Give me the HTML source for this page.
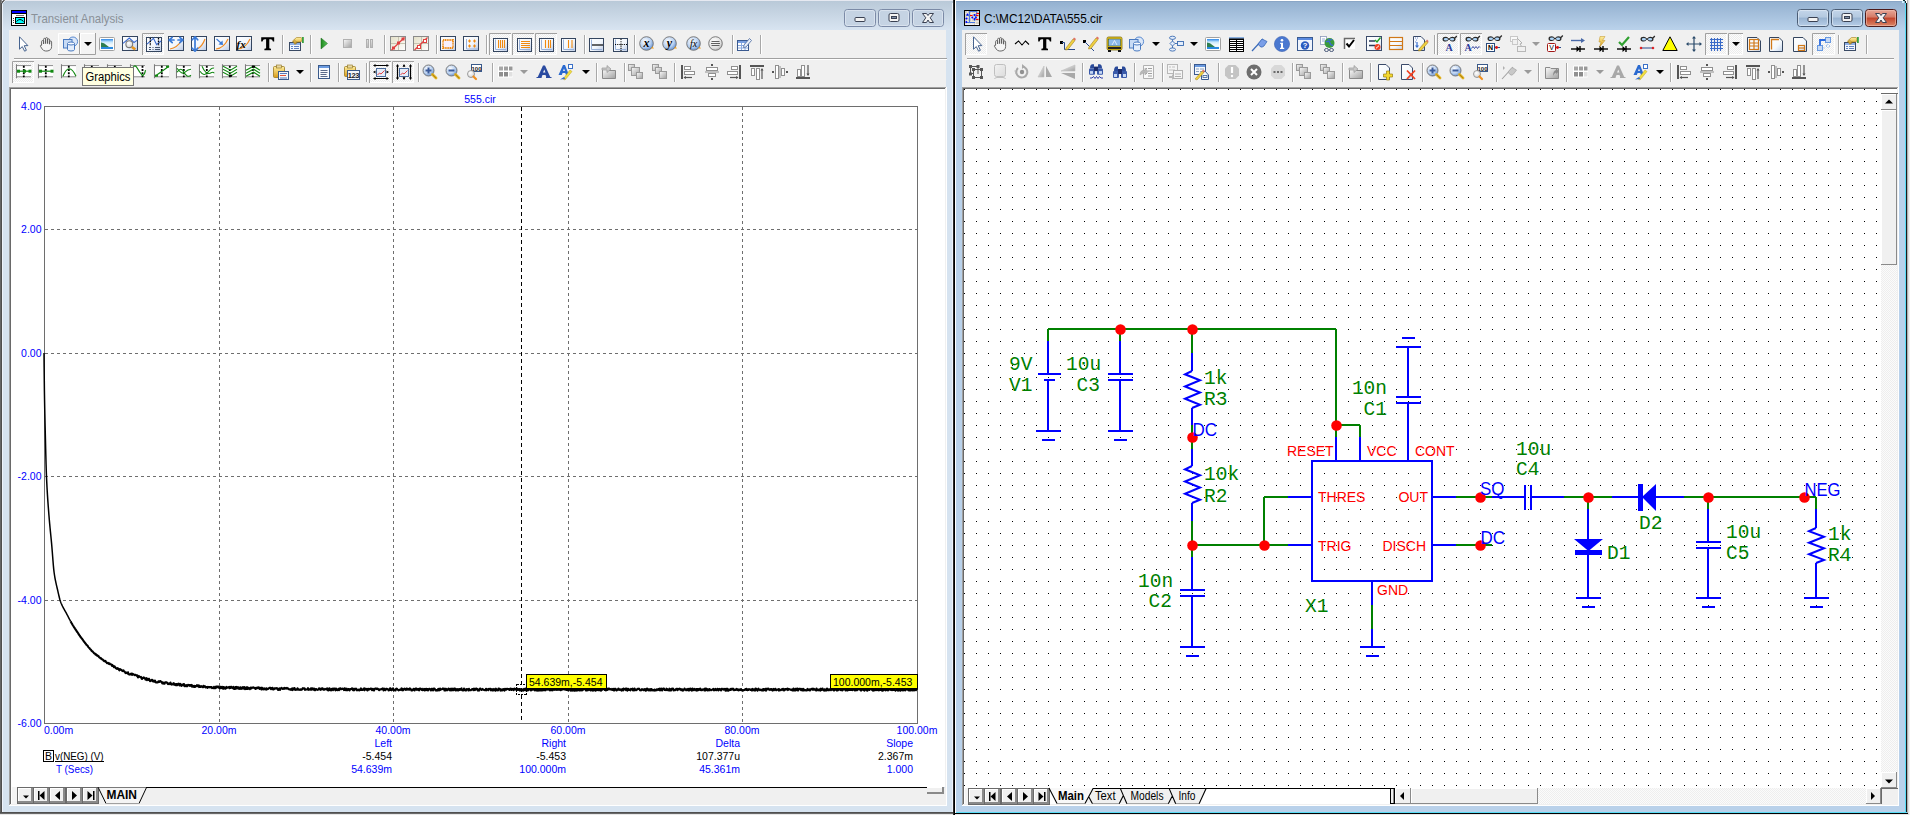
<!DOCTYPE html>
<html><head><meta charset="utf-8"><title>Micro-Cap</title>
<style>html,body{margin:0;padding:0;background:#fff;overflow:hidden;width:1910px;height:815px}svg{display:block;font-family:"Liberation Sans",sans-serif}</style>
</head><body><svg width="1910" height="815" viewBox="0 0 1910 815"><defs><linearGradient id="tgL" x1="0" y1="0" x2="0" y2="1"><stop offset="0" stop-color="#b9c9d8"/><stop offset="1" stop-color="#d8e4f1"/></linearGradient><linearGradient id="tgR" x1="0" y1="0" x2="0" y2="1"><stop offset="0" stop-color="#93b0cf"/><stop offset="1" stop-color="#bad2eb"/></linearGradient><pattern id="dots" x="964" y="89" width="12" height="12" patternUnits="userSpaceOnUse"><rect x="0" y="0" width="1" height="1" fill="#000"/></pattern><linearGradient id="cb1797" x1="0" y1="0" x2="0" y2="1"><stop offset="0" stop-color="#c4d6ea"/><stop offset="0.45" stop-color="#b4c9e0"/><stop offset="0.5" stop-color="#98b3d1"/><stop offset="1" stop-color="#b8cfe8"/></linearGradient><linearGradient id="cb1831" x1="0" y1="0" x2="0" y2="1"><stop offset="0" stop-color="#c4d6ea"/><stop offset="0.45" stop-color="#b4c9e0"/><stop offset="0.5" stop-color="#98b3d1"/><stop offset="1" stop-color="#b8cfe8"/></linearGradient><linearGradient id="cr1865" x1="0" y1="0" x2="0" y2="1"><stop offset="0" stop-color="#e9a99a"/><stop offset="0.45" stop-color="#d47a66"/><stop offset="0.5" stop-color="#c2442c"/><stop offset="1" stop-color="#dd8a6a"/></linearGradient><pattern id="chk" x="0" y="0" width="2" height="2" patternUnits="userSpaceOnUse"><rect width="2" height="2" fill="#fbfbfb"/><rect width="1" height="1" fill="#eeeeee"/><rect x="1" y="1" width="1" height="1" fill="#eeeeee"/></pattern><linearGradient id="gfr" x1="0" y1="0" x2="1" y2="1"><stop offset="0" stop-color="#ffffff"/><stop offset="0.55" stop-color="#f2f6fc"/><stop offset="1" stop-color="#b8c8e4"/></linearGradient>
<radialGradient id="gsph" cx="0.4" cy="0.35" r="0.7"><stop offset="0" stop-color="#ffffff"/><stop offset="0.6" stop-color="#b8d0f0"/><stop offset="1" stop-color="#5a88cc"/></radialGradient>
<radialGradient id="gsphg" cx="0.4" cy="0.35" r="0.7"><stop offset="0" stop-color="#ffffff"/><stop offset="0.7" stop-color="#e0e0e0"/><stop offset="1" stop-color="#a8a8a8"/></radialGradient>
<linearGradient id="ggray" x1="0" y1="0" x2="1" y2="1"><stop offset="0" stop-color="#fafafa"/><stop offset="1" stop-color="#a0a0a0"/></linearGradient>
<linearGradient id="gyel" x1="0" y1="0" x2="0" y2="1"><stop offset="0" stop-color="#fff0a0"/><stop offset="1" stop-color="#d89a18"/></linearGradient>
<linearGradient id="ggrn" x1="0" y1="0" x2="1" y2="0"><stop offset="0" stop-color="#1e8a1e"/><stop offset="1" stop-color="#5ac05a"/></linearGradient>
<linearGradient id="gsky" x1="0" y1="0" x2="0" y2="1"><stop offset="0" stop-color="#2a86e8"/><stop offset="0.3" stop-color="#c8e8fc"/><stop offset="0.6" stop-color="#f4fafc"/><stop offset="1" stop-color="#e0f0f8"/></linearGradient>
<linearGradient id="gbeige" x1="0" y1="0" x2="1" y2="1"><stop offset="0" stop-color="#e4e0c8"/><stop offset="1" stop-color="#ffffff"/></linearGradient>
<linearGradient id="gdoc" x1="0" y1="0" x2="1" y2="1"><stop offset="0" stop-color="#ffffff"/><stop offset="0.6" stop-color="#f4f8fc"/><stop offset="1" stop-color="#c4d4ec"/></linearGradient>
<pattern id="chk2" x="0" y="0" width="2" height="2" patternUnits="userSpaceOnUse"><rect width="2" height="2" fill="#fcfcfc"/><rect width="1" height="1" fill="#ececec"/><rect x="1" y="1" width="1" height="1" fill="#ececec"/></pattern></defs><rect x="0" y="0" width="1910" height="815" fill="#ffffff" /><rect x="0" y="0" width="953" height="1" fill="#e6e9f1" /><rect x="2" y="1" width="951" height="811" fill="#d6e3f0" /><rect x="2" y="1" width="951" height="29" fill="url(#tgL)" /><rect x="2" y="4" width="1" height="808" fill="#eef3fb" /><rect x="952" y="3" width="1" height="809" fill="#eef3fb" /><rect x="0" y="0" width="1" height="814" fill="#666666" /><rect x="1" y="0" width="1" height="3" fill="#8a8a8a" /><rect x="1" y="3" width="1" height="811" fill="#4f4f4f" /><rect x="2" y="1" width="1" height="2" fill="#5a5a5a" /><rect x="3" y="0" width="1" height="2" fill="#6a6a6a" /><rect x="4" y="0" width="1" height="1" fill="#8a8a8a" /><rect x="3" y="2" width="1" height="1" fill="#dfe8f2" /><rect x="4" y="1" width="1" height="1" fill="#dfe8f2" /><rect x="0" y="812" width="954" height="1" fill="#4f4f4f" /><rect x="0" y="813" width="954" height="1" fill="#6a6a6a" /><rect x="0" y="814" width="954" height="1" fill="#e8e8e8" /><rect x="953" y="0" width="1" height="815" fill="#2a2a2a" /><rect x="954" y="0" width="1" height="815" fill="#000000" /><rect x="9" y="30" width="937" height="57" fill="#f0f0f0" /><rect x="14" y="58" width="933" height="1" fill="#a0a0a0" /><rect x="14" y="59" width="933" height="1" fill="#ffffff" /><rect x="9" y="87" width="938" height="1" fill="#a0a0a0" /><rect x="9" y="87" width="1" height="719" fill="#a0a0a0" /><rect x="10" y="88" width="936" height="1" fill="#696969" /><rect x="10" y="88" width="1" height="717" fill="#696969" /><rect x="946" y="87" width="1" height="719" fill="#ffffff" /><rect x="9" y="805" width="938" height="1" fill="#ffffff" /><rect x="945" y="88" width="1" height="717" fill="#f0f0f0" /><rect x="10" y="804" width="936" height="1" fill="#f0f0f0" /><rect x="11" y="89" width="934" height="698" fill="#ffffff" /><rect x="11" y="788" width="934" height="16" fill="#f0f0f0" /><rect x="98" y="787" width="830" height="1" fill="#000000" /><rect x="955" y="0" width="1" height="815" fill="#ffffff" /><rect x="956" y="1" width="950" height="811" fill="#b9d1ea" /><rect x="956" y="1" width="950" height="29" fill="url(#tgR)" /><rect x="956" y="1" width="950" height="1" fill="#8aa6c6" /><rect x="1905" y="3" width="1" height="810" fill="#58dcf6" /><rect x="1906" y="3" width="1" height="812" fill="#1a1a1a" /><rect x="1907" y="0" width="1" height="815" fill="#b0b0b0" /><rect x="1903" y="0" width="2" height="1" fill="#103030" /><rect x="1905" y="1" width="1" height="2" fill="#103030" /><rect x="1902" y="1" width="2" height="2" fill="#c8f0fc" /><rect x="1908" y="0" width="1" height="815" fill="#dedede" /><rect x="1909" y="0" width="1" height="815" fill="#f2f2f2" /><rect x="956" y="812" width="951" height="1" fill="#58dcf6" /><rect x="955" y="813" width="953" height="1" fill="#000000" /><rect x="955" y="814" width="953" height="1" fill="#e8e8e8" /><rect x="962" y="30" width="937" height="57" fill="#f0f0f0" /><rect x="967" y="58" width="927" height="1" fill="#a0a0a0" /><rect x="967" y="59" width="927" height="1" fill="#ffffff" /><rect x="962" y="87" width="937" height="1" fill="#a0a0a0" /><rect x="962" y="87" width="1" height="719" fill="#a0a0a0" /><rect x="963" y="88" width="935" height="1" fill="#696969" /><rect x="963" y="88" width="1" height="717" fill="#696969" /><rect x="1898" y="87" width="1" height="719" fill="#ffffff" /><rect x="962" y="805" width="937" height="1" fill="#ffffff" /><rect x="1897" y="88" width="1" height="717" fill="#f0f0f0" /><rect x="963" y="804" width="935" height="1" fill="#f0f0f0" /><rect x="964" y="89" width="933" height="715" fill="#ffffff" /><line x1="219.5" y1="107" x2="219.5" y2="723" stroke="#6e6e6e" stroke-width="1" stroke-dasharray="3 3" shape-rendering="crispEdges"/><line x1="393.5" y1="107" x2="393.5" y2="723" stroke="#6e6e6e" stroke-width="1" stroke-dasharray="3 3" shape-rendering="crispEdges"/><line x1="568.5" y1="107" x2="568.5" y2="723" stroke="#6e6e6e" stroke-width="1" stroke-dasharray="3 3" shape-rendering="crispEdges"/><line x1="742.5" y1="107" x2="742.5" y2="723" stroke="#6e6e6e" stroke-width="1" stroke-dasharray="3 3" shape-rendering="crispEdges"/><line x1="45" y1="229.5" x2="917" y2="229.5" stroke="#6e6e6e" stroke-width="1" stroke-dasharray="3 3" shape-rendering="crispEdges"/><line x1="45" y1="353.5" x2="917" y2="353.5" stroke="#6e6e6e" stroke-width="1" stroke-dasharray="3 3" shape-rendering="crispEdges"/><line x1="45" y1="476.5" x2="917" y2="476.5" stroke="#6e6e6e" stroke-width="1" stroke-dasharray="3 3" shape-rendering="crispEdges"/><line x1="45" y1="600.5" x2="917" y2="600.5" stroke="#6e6e6e" stroke-width="1" stroke-dasharray="3 3" shape-rendering="crispEdges"/><rect x="44.5" y="106.5" width="873" height="617" fill="none" stroke="#6e6e6e" stroke-width="1" shape-rendering="crispEdges"/><line x1="521.5" y1="107" x2="521.5" y2="723" stroke="#000" stroke-width="1" stroke-dasharray="4 3" shape-rendering="crispEdges"/><text x="41.5" y="110" font-family="Liberation Sans" font-size="10.5" fill="#0000ff" text-anchor="end" font-weight="normal" >4.00</text><text x="41.5" y="233" font-family="Liberation Sans" font-size="10.5" fill="#0000ff" text-anchor="end" font-weight="normal" >2.00</text><text x="41.5" y="357" font-family="Liberation Sans" font-size="10.5" fill="#0000ff" text-anchor="end" font-weight="normal" >0.00</text><text x="41.5" y="480" font-family="Liberation Sans" font-size="10.5" fill="#0000ff" text-anchor="end" font-weight="normal" >-2.00</text><text x="41.5" y="604" font-family="Liberation Sans" font-size="10.5" fill="#0000ff" text-anchor="end" font-weight="normal" >-4.00</text><text x="41.5" y="727" font-family="Liberation Sans" font-size="10.5" fill="#0000ff" text-anchor="end" font-weight="normal" >-6.00</text><text x="219" y="734" font-family="Liberation Sans" font-size="10.5" fill="#0000ff" text-anchor="middle" font-weight="normal" >20.00m</text><text x="393" y="734" font-family="Liberation Sans" font-size="10.5" fill="#0000ff" text-anchor="middle" font-weight="normal" >40.00m</text><text x="568" y="734" font-family="Liberation Sans" font-size="10.5" fill="#0000ff" text-anchor="middle" font-weight="normal" >60.00m</text><text x="742" y="734" font-family="Liberation Sans" font-size="10.5" fill="#0000ff" text-anchor="middle" font-weight="normal" >80.00m</text><text x="917" y="734" font-family="Liberation Sans" font-size="10.5" fill="#0000ff" text-anchor="middle" font-weight="normal" >100.00m</text><text x="44" y="734" font-family="Liberation Sans" font-size="10.5" fill="#0000ff" text-anchor="start" font-weight="normal" >0.00m</text><text x="480" y="103" font-family="Liberation Sans" font-size="10.5" fill="#0000ff" text-anchor="middle" font-weight="normal" >555.cir</text><text x="392" y="747" font-family="Liberation Sans" font-size="10.5" fill="#0000ff" text-anchor="end" font-weight="normal" >Left</text><text x="566" y="747" font-family="Liberation Sans" font-size="10.5" fill="#0000ff" text-anchor="end" font-weight="normal" >Right</text><text x="740" y="747" font-family="Liberation Sans" font-size="10.5" fill="#0000ff" text-anchor="end" font-weight="normal" >Delta</text><text x="913" y="747" font-family="Liberation Sans" font-size="10.5" fill="#0000ff" text-anchor="end" font-weight="normal" >Slope</text><text x="392" y="760" font-family="Liberation Sans" font-size="10.5" fill="#000000" text-anchor="end" font-weight="normal" >-5.454</text><text x="566" y="760" font-family="Liberation Sans" font-size="10.5" fill="#000000" text-anchor="end" font-weight="normal" >-5.453</text><text x="740" y="760" font-family="Liberation Sans" font-size="10.5" fill="#000000" text-anchor="end" font-weight="normal" >107.377u</text><text x="913" y="760" font-family="Liberation Sans" font-size="10.5" fill="#000000" text-anchor="end" font-weight="normal" >2.367m</text><text x="392" y="773" font-family="Liberation Sans" font-size="10.5" fill="#0000ff" text-anchor="end" font-weight="normal" >54.639m</text><text x="566" y="773" font-family="Liberation Sans" font-size="10.5" fill="#0000ff" text-anchor="end" font-weight="normal" >100.000m</text><text x="740" y="773" font-family="Liberation Sans" font-size="10.5" fill="#0000ff" text-anchor="end" font-weight="normal" >45.361m</text><text x="913" y="773" font-family="Liberation Sans" font-size="10.5" fill="#0000ff" text-anchor="end" font-weight="normal" >1.000</text><rect x="43.5" y="750.5" width="10" height="11" fill="none" stroke="#000" stroke-width="1" shape-rendering="crispEdges"/><text x="45" y="760" font-family="Liberation Sans" font-size="10.5" fill="#000" text-anchor="start" font-weight="normal" >B</text><text x="55" y="760" font-family="Liberation Sans" font-size="10.5" fill="#000" text-anchor="start" font-weight="normal" textLength="48.5" lengthAdjust="spacingAndGlyphs">v(NEG) (V)</text><rect x="55" y="761" width="49" height="1" fill="#000" /><text x="56" y="773" font-family="Liberation Sans" font-size="10.5" fill="#0000ff" text-anchor="start" font-weight="normal" textLength="37" lengthAdjust="spacingAndGlyphs">T (Secs)</text><polyline points="44.00,353.00 44.14,367.36 44.28,380.40 44.41,390.91 44.55,399.43 44.69,406.98 44.83,413.77 44.97,420.00 45.10,425.87 45.24,431.57 45.38,437.30 45.52,443.02 45.66,448.64 45.79,454.11 45.93,459.34 46.07,464.26 46.21,468.79 46.34,472.86 46.48,476.40 46.62,479.50 46.76,482.43 46.90,485.20 47.03,487.82 47.17,490.30 47.31,492.66 47.45,494.91 47.59,497.06 47.72,499.11 47.86,501.10 48.00,503.02 48.20,505.71 48.57,510.52 48.94,515.28 49.31,519.73 49.68,523.88 50.05,527.79 50.42,531.57 50.79,535.29 51.16,539.04 51.53,542.90 51.89,546.98 52.26,551.47 52.63,556.22 53.00,560.97 53.37,565.44 53.74,569.37 54.11,572.49 54.48,575.00 54.85,577.26 55.22,579.31 55.59,581.19 55.96,582.93 56.33,584.57 56.70,586.15 57.07,587.71 57.44,589.29 57.81,590.91 58.18,592.55 58.55,594.17 58.92,595.76 59.28,597.28 59.65,598.71 60.02,600.03 60.39,601.21 60.76,602.24 61.13,603.19 61.50,604.08 61.87,604.93 62.24,605.72 62.61,606.48 62.98,607.20 63.35,607.90 63.72,608.57 64.09,609.22 64.46,609.87 64.83,610.51 65.20,611.15 65.57,611.80 65.94,612.45 66.31,613.13 66.67,613.83 67.04,614.54 67.41,615.25 67.78,615.96 68.15,616.67 68.52,617.39 68.89,618.10 69.26,618.80 69.63,619.51 70.00,620.21 70.50,621.14" fill="none" stroke="#000" stroke-width="1.5" stroke-linejoin="round"/><polyline points="70.50,621.14 71.00,622.05 71.50,622.97 72.00,623.81 72.50,624.70 73.00,625.52 73.50,626.28 74.00,627.11 74.50,627.79 75.00,628.62 75.50,629.30 76.00,630.05 76.50,630.88 77.00,631.73 77.50,632.28 78.00,633.04 78.50,633.90 79.00,634.74 79.50,635.34 80.00,636.00 80.50,636.93 81.00,637.27 81.50,638.31 82.00,638.76 82.50,639.38 83.00,640.04 83.50,640.80 84.00,641.72 84.50,642.05 85.00,642.92 85.50,643.59 86.00,644.07 86.50,644.80 87.00,645.11 87.50,645.71 88.00,646.40 88.50,647.30 89.00,647.70 89.50,648.19 90.00,648.94 90.50,649.38 91.00,649.80 91.50,650.70 92.00,651.14 92.50,651.27 93.00,652.03 93.50,652.46 94.00,653.23 94.50,653.55 95.00,653.58 95.50,654.64 96.00,654.24 96.50,654.92 97.00,655.64 97.50,655.43 98.00,656.15 98.50,656.06 99.00,657.10 99.50,657.58 100.00,657.75 100.50,658.45 101.00,658.19 101.50,658.98 102.00,659.23 102.50,659.56 103.00,659.76 103.50,660.58 104.00,661.06 104.50,660.81 105.00,661.39 105.50,660.94 106.00,662.11 106.50,662.36 107.00,663.16 107.50,663.25 108.00,662.82 108.50,663.27 109.00,663.98 109.50,663.35 110.00,664.29 110.50,664.15 111.00,664.37 111.50,664.56 112.00,665.94 112.50,665.23 113.00,665.69 113.50,666.20 114.00,667.25 114.50,666.24 115.00,667.11 115.50,667.54 116.00,668.37 116.50,668.53 117.00,668.87 117.50,668.11 118.00,668.60 118.50,668.74 119.00,669.93 119.50,670.31 120.00,669.08 120.50,669.36 121.00,669.69 121.50,669.92 122.00,670.62 122.50,671.05 123.00,670.64 123.50,670.35 124.00,671.38 124.50,671.49 125.00,672.10 125.50,673.09 126.00,672.77 126.50,672.61 127.00,673.03 127.50,673.35 128.00,672.22 128.50,674.22 129.00,674.16 129.50,674.56 130.00,674.58 130.50,673.87 131.00,674.07 131.50,673.59 132.00,674.94 132.50,673.85 133.00,674.03 133.50,674.52 134.00,674.59 134.50,675.15 135.00,674.68 135.50,674.73 136.00,675.23 136.50,675.29 137.00,676.03 137.50,675.44 138.00,677.47 138.50,677.06 139.00,676.19 139.50,676.58 140.00,676.94 140.50,677.13 141.00,676.76 141.50,678.51 142.00,678.97 142.50,677.96 143.00,678.15 143.50,677.42 144.00,677.60 144.50,678.27 145.00,678.24 145.50,679.62 146.00,678.29 146.50,678.12 147.00,680.29 147.50,679.49 148.00,678.78 148.50,679.79 149.00,678.78 149.50,680.00 150.00,681.12 150.50,680.99 151.00,680.74 151.50,679.90 152.00,680.25 152.50,679.92 153.00,681.36 153.50,680.95 154.00,681.60 154.50,680.71 155.00,680.58 155.50,681.98 156.00,682.46 156.50,682.27 157.00,682.26 157.50,682.38 158.00,682.30 158.50,681.26 159.00,681.98 159.50,681.71 160.00,681.08 160.50,681.15 161.00,681.78 161.50,681.81 162.00,682.84 162.50,683.49 163.00,682.44 163.50,683.58 164.00,683.76 164.50,683.76 165.00,682.53 165.50,682.28 166.00,682.36 166.50,682.36 167.00,682.44 167.50,683.43 168.00,684.10 168.50,684.03 169.00,683.30 169.50,683.75 170.00,684.13 170.50,682.62 171.00,683.95 171.50,684.56 172.00,684.34 172.50,684.33 173.00,683.79 173.50,683.20 174.00,684.60 174.50,683.65 175.00,684.74 175.50,685.18 176.00,683.97 176.50,684.04 177.00,685.30 177.50,684.86 178.00,683.70 178.50,683.66 179.00,683.77 179.50,685.48 180.00,685.32 180.50,683.92 181.00,685.48 181.50,685.87 182.00,685.21 182.50,684.59 183.00,685.08 183.50,684.21 184.00,684.00 184.50,686.16 185.00,685.50 185.50,685.28 186.00,686.23 186.50,685.18 187.00,686.19 187.50,686.14 188.00,684.83 188.50,684.97 189.00,685.11 189.50,685.04 190.00,685.84 190.50,685.17 191.00,685.57 191.50,684.98 192.00,686.73 192.50,685.55 193.00,685.83 193.50,686.14 194.00,686.89 194.50,685.87 195.00,687.01 195.50,686.13 196.00,686.24 196.50,686.26 197.00,685.19 197.50,686.15 198.00,685.63 198.50,685.27 199.00,687.06 199.50,685.71 200.00,686.41 200.50,687.00 201.00,686.67 201.50,686.20 202.00,686.65 202.50,686.77 203.00,687.31 203.50,685.85 204.00,686.88 204.50,686.22 205.00,686.32 205.50,687.44 206.00,686.89 206.50,687.03 207.00,687.50 207.50,687.86 208.00,686.86 208.50,687.26 209.00,687.05 209.50,687.09 210.00,687.52 210.50,687.01 211.00,687.22 211.50,687.12 212.00,688.16 212.50,687.65 213.00,688.07 213.50,688.23 214.00,686.75 214.50,687.43 215.00,688.30 215.50,688.09 216.00,686.57 216.50,686.55 217.00,687.27 217.50,686.48 218.00,686.87 218.50,686.51 219.00,687.84 219.50,688.11 220.00,688.37 220.50,686.75 221.00,688.01 221.50,687.90 222.00,686.77 222.50,688.42 223.00,688.62 223.50,686.99 224.00,688.61 224.50,687.41 225.00,687.62 225.50,688.74 226.00,688.41 226.50,686.94 227.00,687.55 227.50,687.75 228.00,687.38 228.50,687.07 229.00,687.36 229.50,688.26 230.00,686.73 230.50,687.92 231.00,687.68 231.50,686.77 232.00,687.47 232.50,688.13 233.00,687.89 233.50,686.92 234.00,688.96 234.50,688.54 235.00,688.96 235.50,687.06 236.00,687.43 236.50,686.95 237.00,688.58 237.50,687.48 238.00,687.18 238.50,687.84 239.00,688.93 239.50,688.74 240.00,687.52 240.50,687.29 241.00,688.99 241.50,688.24 242.00,688.54 242.50,687.21 243.00,687.15 243.50,688.55 244.00,687.98 244.50,687.22 245.00,689.13 245.50,688.48 246.00,688.86 246.50,687.29 247.00,689.00 247.50,687.27 248.00,689.04 248.50,688.15 249.00,687.91 249.50,688.39 250.00,689.22 250.50,687.79 251.00,687.49 251.50,688.38 252.00,687.75 252.50,687.48 253.00,687.61 253.50,687.37 254.00,687.72 254.50,687.97 255.00,687.97 255.50,688.98 256.00,687.95 256.50,688.43 257.00,687.73 257.50,688.11 258.00,687.40 258.50,687.92 259.00,687.41 259.50,689.00 260.00,688.61 260.50,687.83 261.00,688.46 261.50,689.49 262.00,687.67 262.50,689.25 263.00,688.41 263.50,688.56 264.00,689.31 264.50,688.35 265.00,688.61 265.50,689.02 266.00,689.68 266.50,688.28 267.00,689.37 267.50,689.10 268.00,688.95 268.50,688.45 269.00,688.34 269.50,687.70 270.00,687.88 270.50,687.75 271.00,689.24 271.50,688.18 272.00,687.98 272.50,687.82 273.00,689.49 273.50,689.57 274.00,689.13 274.50,688.29 275.00,688.21 275.50,688.33 276.00,688.70 276.50,688.05 277.00,688.69 277.50,688.30 278.00,689.84 278.50,689.87 279.00,688.94 279.50,688.29 280.00,689.88 280.50,688.44 281.00,688.55 281.50,687.78 282.00,688.62 282.50,688.84 283.00,688.91 283.50,688.25 284.00,688.92 284.50,687.83 285.00,688.41 285.50,688.03 286.00,688.72 286.50,687.94 287.00,687.91 287.50,688.53 288.00,688.38 288.50,689.16 289.00,689.05 289.50,689.54 290.00,689.34 290.50,689.48 291.00,689.84 291.50,688.77 292.00,688.64 292.50,690.09 293.00,688.26 293.50,689.53 294.00,689.36 294.50,688.05 295.00,689.79 295.50,689.92 296.00,689.35 296.50,689.59 297.00,689.77 297.50,688.29 298.00,689.14 298.50,689.10 299.00,689.84 299.50,689.78 300.00,689.83 300.50,689.30 301.00,689.98 301.50,689.53 302.00,689.56 302.50,688.54 303.00,688.11 303.50,688.34 304.00,688.84 304.50,688.28 305.00,689.90 305.50,689.29 306.00,689.45 306.50,689.45 307.00,689.57 307.50,689.16 308.00,688.09 308.50,689.84 309.00,689.74 309.50,689.20 310.00,689.28 310.50,689.55 311.00,688.25 311.50,689.73 312.00,688.67 312.50,688.28 313.00,688.71 313.50,689.73 314.00,688.58 314.50,689.76 315.00,690.28 315.50,689.22 316.00,688.98 316.50,689.20 317.00,689.65 317.50,689.84 318.00,689.51 318.50,689.57 319.00,688.33 319.50,688.48 320.00,688.72 320.50,689.80 321.00,688.84 321.50,689.42 322.00,688.20 322.50,688.31 323.00,688.77 323.50,689.66 324.00,689.70 324.50,689.67 325.00,688.82 325.50,689.32 326.00,689.21 326.50,689.22 327.00,688.45 327.50,690.16 328.00,688.63 328.50,690.35 329.00,690.26 329.50,688.24 330.00,689.21 330.50,690.00 331.00,690.33 331.50,689.19 332.00,688.80 332.50,688.67 333.00,690.29 333.50,688.67 334.00,689.49 334.50,688.52 335.00,689.36 335.50,690.31 336.00,688.51 336.50,690.02 337.00,689.34 337.50,690.17 338.00,689.77 338.50,688.73 339.00,690.20 339.50,689.29 340.00,688.28 340.50,688.23 341.00,689.31 341.50,689.22 342.00,688.89 342.50,688.54 343.00,688.99 343.50,688.93 344.00,690.08 344.50,688.24 345.00,689.89 345.50,690.08 346.00,688.50 346.50,690.28 347.00,689.81 347.50,690.22 348.00,688.88 348.50,689.06 349.00,689.11 349.50,690.44 350.00,689.54 350.50,689.04 351.00,689.19 351.50,688.85 352.00,688.36 352.50,688.47 353.00,690.09 353.50,688.88 354.00,690.31 354.50,688.80 355.00,688.84 355.50,689.38 356.00,688.68 356.50,689.08 357.00,690.36 357.50,690.21 358.00,690.05 358.50,689.65 359.00,690.27 359.50,690.34 360.00,689.47 360.50,689.85 361.00,688.38 361.50,689.88 362.00,689.26 362.50,689.93 363.00,689.69 363.50,688.90 364.00,688.38 364.50,690.31 365.00,688.56 365.50,689.32 366.00,689.03 366.50,688.93 367.00,689.91 367.50,690.43 368.00,688.86 368.50,689.73 369.00,688.95 369.50,689.51 370.00,689.15 370.50,688.66 371.00,688.64 371.50,688.75 372.00,690.28 372.50,689.39 373.00,688.78 373.50,690.29 374.00,690.49 374.50,689.29 375.00,688.60 375.50,688.72 376.00,688.50 376.50,689.05 377.00,688.50 377.50,688.83 378.00,688.87 378.50,689.56 379.00,690.26 379.50,689.95 380.00,689.21 380.50,689.22 381.00,689.46 381.50,689.14 382.00,689.05 382.50,688.45 383.00,688.92 383.50,690.44 384.00,688.59 384.50,689.42 385.00,689.70 385.50,690.21 386.00,688.79 386.50,688.91 387.00,688.87 387.50,689.20 388.00,689.30 388.50,690.42 389.00,690.19 389.50,690.24 390.00,688.37 390.50,688.40 391.00,689.89 391.50,690.30 392.00,689.37 392.50,689.62 393.00,688.33 393.50,689.19 394.00,690.37 394.50,690.15 395.00,690.21 395.50,690.47 396.00,688.88 396.50,688.58 397.00,688.68 397.50,689.49 398.00,689.84 398.50,690.41 399.00,689.93 399.50,689.76 400.00,690.02 400.50,689.35 401.00,689.56 401.50,688.43 402.00,690.07 402.50,688.86 403.00,690.37 403.50,689.77 404.00,689.02 404.50,688.63 405.00,688.90 405.50,689.75 406.00,689.89 406.50,688.60 407.00,688.51 407.50,689.51 408.00,689.64 408.50,689.21 409.00,688.85 409.50,689.68 410.00,688.38 410.50,689.02 411.00,689.37 411.50,690.47 412.00,689.78 412.50,690.31 413.00,689.41 413.50,688.88 414.00,688.91 414.50,690.48 415.00,689.92 415.50,689.04 416.00,688.41 416.50,689.46 417.00,689.85 417.50,689.29 418.00,688.94 418.50,689.84 419.00,690.41 419.50,688.87 420.00,688.45 420.50,689.12 421.00,689.30 421.50,689.88 422.00,688.81 422.50,690.13 423.00,690.00 423.50,689.49 424.00,688.83 424.50,690.51 425.00,689.07 425.50,690.18 426.00,688.89 426.50,688.87 427.00,690.06 427.50,689.03 428.00,690.48 428.50,689.48 429.00,688.80 429.50,688.88 430.00,689.30 430.50,689.85 431.00,690.48 431.50,688.71 432.00,689.26 432.50,688.86 433.00,690.53 433.50,688.70 434.00,688.51 434.50,688.53 435.00,689.26 435.50,690.37 436.00,690.34 436.50,690.01 437.00,690.59 437.50,690.45 438.00,689.12 438.50,688.81 439.00,690.46 439.50,690.04 440.00,688.47 440.50,689.86 441.00,689.23 441.50,689.22 442.00,689.13 442.50,688.78 443.00,688.41 443.50,689.02 444.00,689.18 444.50,690.51 445.00,688.68 445.50,690.53 446.00,688.86 446.50,689.19 447.00,690.22 447.50,690.22 448.00,689.36 448.50,688.52 449.00,689.45 449.50,689.23 450.00,690.44 450.50,688.84 451.00,689.22 451.50,690.39 452.00,688.48 452.50,689.32 453.00,690.20 453.50,690.10 454.00,688.51 454.50,688.49 455.00,688.56 455.50,690.44 456.00,688.99 456.50,690.06 457.00,690.40 457.50,689.17 458.00,689.02 458.50,690.53 459.00,689.78 459.50,689.00 460.00,690.00 460.50,689.12 461.00,689.03 461.50,688.43 462.00,690.09 462.50,690.44 463.00,689.82 463.50,690.50 464.00,688.48 464.50,688.94 465.00,689.48 465.50,690.54 466.00,690.53 466.50,689.28 467.00,688.98 467.50,689.38 468.00,689.52 468.50,690.48 469.00,688.84 469.50,690.20 470.00,690.06 470.50,690.25 471.00,690.14 471.50,689.77 472.00,689.16 472.50,689.14 473.00,689.23 473.50,690.16 474.00,688.61 474.50,688.87 475.00,690.10 475.50,688.98 476.00,688.58 476.50,688.52 477.00,689.66 477.50,689.16 478.00,690.60 478.50,690.39 479.00,690.62 479.50,689.03 480.00,688.63 480.50,688.66 481.00,689.54 481.50,690.01 482.00,689.43 482.50,688.96 483.00,689.37 483.50,689.81 484.00,689.93 484.50,690.09 485.00,690.31 485.50,689.91 486.00,688.72 486.50,690.30 487.00,689.10 487.50,689.70 488.00,689.27 488.50,690.08 489.00,688.89 489.50,689.00 490.00,688.99 490.50,688.79 491.00,690.40 491.50,689.73 492.00,689.17 492.50,689.33 493.00,690.64 493.50,689.57 494.00,688.97 494.50,690.24 495.00,689.90 495.50,690.64 496.00,688.68 496.50,689.50 497.00,690.26 497.50,690.31 498.00,690.47 498.50,688.55 499.00,689.11 499.50,688.72 500.00,688.88 500.50,690.60 501.00,689.75 501.50,690.51 502.00,689.28 502.50,690.37 503.00,689.45 503.50,689.04 504.00,690.18 504.50,690.55 505.00,688.70 505.50,689.78 506.00,689.83 506.50,688.95 507.00,689.28 507.50,688.78 508.00,688.92 508.50,689.03 509.00,689.79 509.50,689.90 510.00,688.92 510.50,688.50 511.00,689.19 511.50,689.96 512.00,688.88 512.50,689.16 513.00,688.92 513.50,690.22 514.00,689.68 514.50,688.61 515.00,688.70 515.50,689.34 516.00,689.68 516.50,689.88 517.00,688.67 517.50,688.83 518.00,690.00 518.50,689.38 519.00,689.10 519.50,689.15 520.00,690.57 520.50,689.16 521.00,689.72 521.50,689.26 522.00,689.39 522.50,690.38 523.00,690.67 523.50,689.28 524.00,688.91 524.50,690.08 525.00,688.93 525.50,688.49 526.00,690.46 526.50,689.41 527.00,690.29 527.50,689.37 528.00,690.42 528.50,689.50 529.00,688.84 529.50,688.51 530.00,689.70 530.50,689.89 531.00,690.48 531.50,688.68 532.00,689.85 532.50,689.30 533.00,689.59 533.50,688.80 534.00,689.11 534.50,689.63 535.00,690.52 535.50,688.72 536.00,689.56 536.50,690.26 537.00,690.61 537.50,688.92 538.00,688.76 538.50,690.56 539.00,690.63 539.50,689.55 540.00,688.60 540.50,690.52 541.00,689.34 541.50,690.48 542.00,689.85 542.50,690.30 543.00,688.84 543.50,690.22 544.00,688.98 544.50,689.38 545.00,690.35 545.50,690.31 546.00,688.89 546.50,688.97 547.00,689.37 547.50,689.63 548.00,689.33 548.50,688.76 549.00,689.03 549.50,690.09 550.00,690.46 550.50,688.58 551.00,689.73 551.50,690.16 552.00,688.58 552.50,690.34 553.00,688.75 553.50,689.81 554.00,689.70 554.50,689.87 555.00,689.17 555.50,689.42 556.00,689.77 556.50,689.43 557.00,689.94 557.50,689.48 558.00,689.46 558.50,688.55 559.00,689.86 559.50,689.57 560.00,689.01 560.50,690.17 561.00,690.21 561.50,689.50 562.00,688.89 562.50,689.54 563.00,688.73 563.50,688.78 564.00,689.44 564.50,688.70 565.00,689.47 565.50,689.62 566.00,688.59 566.50,689.90 567.00,688.68 567.50,690.11 568.00,690.21 568.50,689.62 569.00,688.62 569.50,689.61 570.00,689.33 570.50,690.59 571.00,688.80 571.50,690.38 572.00,690.69 572.50,690.11 573.00,690.29 573.50,688.92 574.00,690.66 574.50,689.58 575.00,690.60 575.50,690.51 576.00,688.86 576.50,690.23 577.00,690.55 577.50,688.64 578.00,689.27 578.50,690.16 579.00,688.85 579.50,690.47 580.00,689.10 580.50,690.29 581.00,688.81 581.50,689.60 582.00,690.52 582.50,688.96 583.00,689.08 583.50,689.61 584.00,689.20 584.50,688.58 585.00,688.90 585.50,688.85 586.00,690.56 586.50,689.99 587.00,690.47 587.50,688.87 588.00,690.23 588.50,688.75 589.00,689.67 589.50,689.90 590.00,689.29 590.50,690.42 591.00,689.72 591.50,689.78 592.00,690.44 592.50,688.73 593.00,690.68 593.50,689.89 594.00,689.37 594.50,690.25 595.00,689.08 595.50,690.68 596.00,689.77 596.50,689.29 597.00,690.18 597.50,689.47 598.00,688.89 598.50,690.14 599.00,688.61 599.50,690.30 600.00,689.06 600.50,689.91 601.00,690.66 601.50,689.79 602.00,689.96 602.50,689.19 603.00,688.50 603.50,688.57 604.00,688.83 604.50,689.86 605.00,689.45 605.50,689.63 606.00,690.47 606.50,688.79 607.00,689.00 607.50,689.94 608.00,688.55 608.50,688.51 609.00,689.28 609.50,688.73 610.00,689.29 610.50,688.99 611.00,689.78 611.50,689.80 612.00,688.95 612.50,689.87 613.00,689.54 613.50,688.80 614.00,690.56 614.50,689.04 615.00,688.83 615.50,688.71 616.00,689.90 616.50,690.42 617.00,690.22 617.50,689.38 618.00,689.08 618.50,688.53 619.00,689.92 619.50,689.74 620.00,689.27 620.50,689.92 621.00,689.48 621.50,690.56 622.00,690.11 622.50,689.05 623.00,690.49 623.50,688.60 624.00,689.67 624.50,689.39 625.00,689.02 625.50,688.63 626.00,690.21 626.50,688.53 627.00,689.71 627.50,690.57 628.00,688.81 628.50,688.94 629.00,689.84 629.50,689.62 630.00,689.91 630.50,690.29 631.00,688.88 631.50,689.18 632.00,689.16 632.50,688.61 633.00,690.46 633.50,690.22 634.00,690.07 634.50,688.51 635.00,690.36 635.50,690.14 636.00,689.52 636.50,690.13 637.00,689.50 637.50,689.00 638.00,688.73 638.50,689.01 639.00,688.59 639.50,689.24 640.00,690.15 640.50,690.03 641.00,690.36 641.50,690.07 642.00,689.09 642.50,689.72 643.00,689.46 643.50,690.23 644.00,689.65 644.50,689.08 645.00,689.91 645.50,690.62 646.00,688.98 646.50,690.44 647.00,688.53 647.50,689.07 648.00,689.02 648.50,690.14 649.00,690.58 649.50,690.14 650.00,689.22 650.50,690.44 651.00,689.22 651.50,689.03 652.00,690.50 652.50,689.89 653.00,690.02 653.50,689.96 654.00,690.65 654.50,689.53 655.00,690.35 655.50,690.03 656.00,690.39 656.50,689.46 657.00,690.09 657.50,689.75 658.00,689.18 658.50,688.97 659.00,689.87 659.50,688.67 660.00,690.50 660.50,688.82 661.00,688.56 661.50,688.73 662.00,690.54 662.50,689.26 663.00,688.81 663.50,688.56 664.00,688.59 664.50,690.02 665.00,689.89 665.50,690.03 666.00,690.12 666.50,688.64 667.00,689.80 667.50,689.30 668.00,690.30 668.50,690.30 669.00,690.46 669.50,688.65 670.00,690.41 670.50,690.51 671.00,690.58 671.50,688.74 672.00,688.95 672.50,688.75 673.00,688.58 673.50,690.36 674.00,690.29 674.50,689.90 675.00,690.32 675.50,689.89 676.00,689.13 676.50,688.72 677.00,688.72 677.50,690.17 678.00,688.95 678.50,689.20 679.00,689.43 679.50,688.55 680.00,689.06 680.50,689.12 681.00,690.07 681.50,689.31 682.00,689.21 682.50,690.62 683.00,689.61 683.50,690.37 684.00,689.86 684.50,688.57 685.00,689.41 685.50,689.46 686.00,690.20 686.50,689.26 687.00,690.05 687.50,689.68 688.00,688.98 688.50,690.40 689.00,688.70 689.50,690.30 690.00,688.87 690.50,688.50 691.00,688.94 691.50,690.18 692.00,690.65 692.50,688.51 693.00,689.58 693.50,689.58 694.00,690.25 694.50,688.91 695.00,689.59 695.50,689.26 696.00,690.33 696.50,689.07 697.00,690.58 697.50,689.12 698.00,688.97 698.50,690.04 699.00,689.60 699.50,688.74 700.00,689.90 700.50,688.68 701.00,690.23 701.50,690.03 702.00,690.23 702.50,689.88 703.00,689.28 703.50,689.38 704.00,689.37 704.50,690.46 705.00,688.69 705.50,690.45 706.00,688.56 706.50,688.95 707.00,689.08 707.50,690.48 708.00,689.60 708.50,689.33 709.00,690.44 709.50,689.01 710.00,689.51 710.50,689.67 711.00,690.16 711.50,690.16 712.00,689.92 712.50,689.27 713.00,689.22 713.50,688.84 714.00,690.35 714.50,689.96 715.00,690.13 715.50,688.87 716.00,689.47 716.50,690.20 717.00,689.77 717.50,688.78 718.00,689.52 718.50,690.45 719.00,689.02 719.50,688.92 720.00,689.16 720.50,690.05 721.00,690.36 721.50,688.84 722.00,688.84 722.50,689.04 723.00,689.22 723.50,689.65 724.00,688.85 724.50,689.22 725.00,688.92 725.50,690.65 726.00,690.10 726.50,688.72 727.00,690.62 727.50,688.72 728.00,689.35 728.50,690.66 729.00,690.25 729.50,690.11 730.00,689.46 730.50,688.93 731.00,689.90 731.50,688.74 732.00,688.95 732.50,689.35 733.00,688.57 733.50,689.38 734.00,690.24 734.50,690.03 735.00,689.60 735.50,689.89 736.00,689.52 736.50,688.81 737.00,689.83 737.50,689.39 738.00,690.13 738.50,690.50 739.00,689.45 739.50,689.76 740.00,690.15 740.50,689.43 741.00,689.00 741.50,690.09 742.00,690.44 742.50,690.20 743.00,690.04 743.50,690.38 744.00,690.00 744.50,689.91 745.00,689.50 745.50,689.19 746.00,689.88 746.50,688.72 747.00,689.42 747.50,690.22 748.00,690.07 748.50,689.89 749.00,689.05 749.50,689.43 750.00,689.50 750.50,689.87 751.00,689.40 751.50,689.99 752.00,690.55 752.50,688.90 753.00,689.94 753.50,690.21 754.00,689.36 754.50,689.58 755.00,690.64 755.50,688.58 756.00,689.70 756.50,688.85 757.00,690.22 757.50,690.57 758.00,689.64 758.50,688.72 759.00,689.76 759.50,689.69 760.00,690.08 760.50,689.63 761.00,689.91 761.50,690.32 762.00,689.65 762.50,689.40 763.00,690.59 763.50,688.96 764.00,690.01 764.50,689.36 765.00,690.18 765.50,688.77 766.00,690.67 766.50,689.28 767.00,688.62 767.50,689.10 768.00,689.38 768.50,688.53 769.00,689.42 769.50,689.43 770.00,690.04 770.50,689.27 771.00,689.08 771.50,688.99 772.00,690.13 772.50,690.57 773.00,689.66 773.50,688.98 774.00,690.26 774.50,689.36 775.00,688.97 775.50,688.78 776.00,690.21 776.50,690.28 777.00,689.90 777.50,689.53 778.00,689.74 778.50,689.00 779.00,690.62 779.50,689.28 780.00,689.91 780.50,690.30 781.00,690.30 781.50,689.53 782.00,689.15 782.50,689.71 783.00,688.78 783.50,690.33 784.00,689.28 784.50,690.37 785.00,689.09 785.50,689.33 786.00,689.06 786.50,689.44 787.00,688.91 787.50,688.51 788.00,690.09 788.50,689.12 789.00,689.04 789.50,689.16 790.00,689.56 790.50,689.44 791.00,689.90 791.50,689.95 792.00,689.30 792.50,690.54 793.00,690.38 793.50,688.63 794.00,690.32 794.50,690.49 795.00,690.22 795.50,688.81 796.00,690.33 796.50,689.89 797.00,688.53 797.50,688.53 798.00,690.59 798.50,689.94 799.00,689.05 799.50,688.72 800.00,688.81 800.50,689.01 801.00,690.21 801.50,689.26 802.00,688.84 802.50,690.49 803.00,690.24 803.50,688.87 804.00,690.46 804.50,689.84 805.00,690.22 805.50,689.97 806.00,690.47 806.50,690.23 807.00,690.35 807.50,688.93 808.00,690.02 808.50,689.67 809.00,690.13 809.50,689.46 810.00,690.44 810.50,689.72 811.00,689.08 811.50,689.02 812.00,688.81 812.50,689.58 813.00,688.63 813.50,689.53 814.00,688.82 814.50,689.58 815.00,689.60 815.50,689.69 816.00,690.40 816.50,688.51 817.00,690.35 817.50,689.53 818.00,689.74 818.50,689.96 819.00,690.35 819.50,689.32 820.00,689.42 820.50,690.61 821.00,688.67 821.50,689.90 822.00,689.90 822.50,688.56 823.00,689.84 823.50,690.00 824.00,690.55 824.50,689.23 825.00,690.66 825.50,689.62 826.00,689.57 826.50,690.47 827.00,688.57 827.50,690.08 828.00,689.88 828.50,689.24 829.00,690.40 829.50,689.31 830.00,689.54 830.50,689.66 831.00,690.20 831.50,688.96 832.00,689.46 832.50,689.43 833.00,689.72 833.50,690.32 834.00,689.14 834.50,690.32 835.00,689.39 835.50,689.61 836.00,689.10 836.50,689.61 837.00,690.64 837.50,689.94 838.00,690.24 838.50,689.23 839.00,689.20 839.50,689.16 840.00,689.79 840.50,689.90 841.00,690.23 841.50,688.59 842.00,690.09 842.50,690.45 843.00,689.70 843.50,688.61 844.00,689.16 844.50,688.51 845.00,688.92 845.50,690.53 846.00,689.84 846.50,689.95 847.00,690.24 847.50,690.50 848.00,689.85 848.50,689.86 849.00,689.88 849.50,690.03 850.00,689.81 850.50,690.00 851.00,688.97 851.50,689.97 852.00,689.51 852.50,690.18 853.00,688.72 853.50,688.90 854.00,688.58 854.50,690.20 855.00,690.51 855.50,689.94 856.00,689.31 856.50,690.31 857.00,690.23 857.50,689.74 858.00,689.07 858.50,689.16 859.00,689.43 859.50,689.20 860.00,689.45 860.50,689.91 861.00,690.55 861.50,688.62 862.00,689.75 862.50,688.59 863.00,688.76 863.50,690.28 864.00,689.77 864.50,690.52 865.00,689.48 865.50,688.53 866.00,689.35 866.50,689.80 867.00,690.56 867.50,690.66 868.00,689.55 868.50,689.41 869.00,688.72 869.50,689.92 870.00,688.97 870.50,688.83 871.00,688.53 871.50,688.51 872.00,690.00 872.50,688.77 873.00,690.63 873.50,688.69 874.00,690.41 874.50,688.78 875.00,688.54 875.50,690.08 876.00,689.03 876.50,690.11 877.00,688.91 877.50,688.61 878.00,690.20 878.50,690.07 879.00,690.38 879.50,690.11 880.00,688.69 880.50,689.88 881.00,690.06 881.50,689.51 882.00,690.55 882.50,689.06 883.00,690.62 883.50,690.08 884.00,688.53 884.50,688.53 885.00,689.93 885.50,690.30 886.00,688.68 886.50,689.18 887.00,690.10 887.50,688.87 888.00,690.39 888.50,689.57 889.00,688.63 889.50,689.31 890.00,689.76 890.50,689.47 891.00,689.99 891.50,688.82 892.00,690.25 892.50,689.30 893.00,689.92 893.50,689.89 894.00,689.42 894.50,689.35 895.00,690.23 895.50,690.58 896.00,690.23 896.50,689.75 897.00,689.14 897.50,688.63 898.00,690.64 898.50,690.05 899.00,690.32 899.50,689.23 900.00,689.83 900.50,690.65 901.00,690.33 901.50,689.82 902.00,689.18 902.50,689.44 903.00,690.45 903.50,689.33 904.00,690.01 904.50,689.82 905.00,690.47 905.50,690.28 906.00,689.12 906.50,688.50 907.00,689.08 907.50,689.43 908.00,689.79 908.50,690.30 909.00,690.45 909.50,688.59 910.00,690.33 910.50,690.29 911.00,690.41 911.50,689.76 912.00,689.10 912.50,690.37 913.00,690.28 913.50,690.01 914.00,690.51 914.50,689.26 915.00,688.69 915.50,689.72 916.00,690.25 916.50,688.94 917.00,690.15" fill="none" stroke="#000" stroke-width="2.1" stroke-linejoin="round"/><rect x="516.5" y="684.5" width="10" height="10" fill="none" stroke="#000" stroke-width="1" stroke-dasharray="2 1" shape-rendering="crispEdges"/><rect x="526.5" y="674.5" width="80" height="14" fill="#ffff00" stroke="#000" stroke-width="1" shape-rendering="crispEdges"/><text x="529" y="685.5" font-family="Liberation Sans" font-size="10.5" fill="#000" text-anchor="start" font-weight="normal" >54.639m,-5.454</text><rect x="830.5" y="674.5" width="87" height="14" fill="#ffff00" stroke="#000" stroke-width="1" shape-rendering="crispEdges"/><text x="833" y="685.5" font-family="Liberation Sans" font-size="10.5" fill="#000" text-anchor="start" font-weight="normal" >100.000m,-5.453</text><rect x="964" y="89" width="917" height="699" fill="url(#dots)" /><line x1="1048" y1="329" x2="1336" y2="329" stroke="#008000" stroke-width="2" shape-rendering="crispEdges"/><line x1="1048" y1="329" x2="1048" y2="341" stroke="#008000" stroke-width="2" shape-rendering="crispEdges"/><line x1="1120" y1="329" x2="1120" y2="341" stroke="#008000" stroke-width="2" shape-rendering="crispEdges"/><line x1="1192" y1="329" x2="1192" y2="353" stroke="#008000" stroke-width="2" shape-rendering="crispEdges"/><line x1="1336" y1="329" x2="1336" y2="425" stroke="#008000" stroke-width="2" shape-rendering="crispEdges"/><line x1="1336" y1="425" x2="1360" y2="425" stroke="#008000" stroke-width="2" shape-rendering="crispEdges"/><line x1="1336" y1="425" x2="1336" y2="437" stroke="#008000" stroke-width="2" shape-rendering="crispEdges"/><line x1="1360" y1="425" x2="1360" y2="437" stroke="#008000" stroke-width="2" shape-rendering="crispEdges"/><line x1="1192" y1="425" x2="1192" y2="449" stroke="#008000" stroke-width="2" shape-rendering="crispEdges"/><line x1="1192" y1="521" x2="1192" y2="557" stroke="#008000" stroke-width="2" shape-rendering="crispEdges"/><line x1="1192" y1="545" x2="1288" y2="545" stroke="#008000" stroke-width="2" shape-rendering="crispEdges"/><line x1="1264" y1="497" x2="1288" y2="497" stroke="#008000" stroke-width="2" shape-rendering="crispEdges"/><line x1="1264" y1="497" x2="1264" y2="545" stroke="#008000" stroke-width="2" shape-rendering="crispEdges"/><line x1="1372" y1="605" x2="1372" y2="629" stroke="#008000" stroke-width="2" shape-rendering="crispEdges"/><line x1="1456" y1="497" x2="1492" y2="497" stroke="#008000" stroke-width="2" shape-rendering="crispEdges"/><line x1="1456" y1="545" x2="1492" y2="545" stroke="#008000" stroke-width="2" shape-rendering="crispEdges"/><line x1="1564" y1="497" x2="1612" y2="497" stroke="#008000" stroke-width="2" shape-rendering="crispEdges"/><line x1="1588" y1="497" x2="1588" y2="509" stroke="#008000" stroke-width="2" shape-rendering="crispEdges"/><line x1="1684" y1="497" x2="1816" y2="497" stroke="#008000" stroke-width="2" shape-rendering="crispEdges"/><line x1="1708" y1="497" x2="1708" y2="509" stroke="#008000" stroke-width="2" shape-rendering="crispEdges"/><line x1="1816" y1="497" x2="1816" y2="509" stroke="#008000" stroke-width="2" shape-rendering="crispEdges"/><line x1="1048" y1="341" x2="1048" y2="374" stroke="#0000ff" stroke-width="2" shape-rendering="crispEdges"/><line x1="1048" y1="380" x2="1048" y2="431" stroke="#0000ff" stroke-width="2" shape-rendering="crispEdges"/><line x1="1120" y1="341" x2="1120" y2="374" stroke="#0000ff" stroke-width="2" shape-rendering="crispEdges"/><line x1="1120" y1="380" x2="1120" y2="431" stroke="#0000ff" stroke-width="2" shape-rendering="crispEdges"/><line x1="1192" y1="353" x2="1192" y2="371" stroke="#0000ff" stroke-width="2" shape-rendering="crispEdges"/><line x1="1192" y1="408" x2="1192" y2="425" stroke="#0000ff" stroke-width="2" shape-rendering="crispEdges"/><line x1="1192" y1="449" x2="1192" y2="466" stroke="#0000ff" stroke-width="2" shape-rendering="crispEdges"/><line x1="1192" y1="503" x2="1192" y2="521" stroke="#0000ff" stroke-width="2" shape-rendering="crispEdges"/><line x1="1192" y1="557" x2="1192" y2="590" stroke="#0000ff" stroke-width="2" shape-rendering="crispEdges"/><line x1="1192" y1="596" x2="1192" y2="647" stroke="#0000ff" stroke-width="2" shape-rendering="crispEdges"/><line x1="1408" y1="461" x2="1408" y2="403" stroke="#0000ff" stroke-width="2" shape-rendering="crispEdges"/><line x1="1408" y1="397" x2="1408" y2="347" stroke="#0000ff" stroke-width="2" shape-rendering="crispEdges"/><line x1="1336" y1="437" x2="1336" y2="461" stroke="#0000ff" stroke-width="2" shape-rendering="crispEdges"/><line x1="1360" y1="437" x2="1360" y2="461" stroke="#0000ff" stroke-width="2" shape-rendering="crispEdges"/><line x1="1288" y1="497" x2="1312" y2="497" stroke="#0000ff" stroke-width="2" shape-rendering="crispEdges"/><line x1="1288" y1="545" x2="1312" y2="545" stroke="#0000ff" stroke-width="2" shape-rendering="crispEdges"/><line x1="1432" y1="497" x2="1456" y2="497" stroke="#0000ff" stroke-width="2" shape-rendering="crispEdges"/><line x1="1432" y1="545" x2="1456" y2="545" stroke="#0000ff" stroke-width="2" shape-rendering="crispEdges"/><line x1="1372" y1="581" x2="1372" y2="605" stroke="#0000ff" stroke-width="2" shape-rendering="crispEdges"/><line x1="1372" y1="629" x2="1372" y2="647" stroke="#0000ff" stroke-width="2" shape-rendering="crispEdges"/><line x1="1492" y1="497" x2="1525" y2="497" stroke="#0000ff" stroke-width="2" shape-rendering="crispEdges"/><line x1="1531" y1="497" x2="1564" y2="497" stroke="#0000ff" stroke-width="2" shape-rendering="crispEdges"/><line x1="1588" y1="509" x2="1588" y2="540" stroke="#0000ff" stroke-width="2" shape-rendering="crispEdges"/><line x1="1588" y1="552" x2="1588" y2="598" stroke="#0000ff" stroke-width="2" shape-rendering="crispEdges"/><line x1="1612" y1="497" x2="1640" y2="497" stroke="#0000ff" stroke-width="2" shape-rendering="crispEdges"/><line x1="1655" y1="497" x2="1684" y2="497" stroke="#0000ff" stroke-width="2" shape-rendering="crispEdges"/><line x1="1708" y1="509" x2="1708" y2="542" stroke="#0000ff" stroke-width="2" shape-rendering="crispEdges"/><line x1="1708" y1="548" x2="1708" y2="598" stroke="#0000ff" stroke-width="2" shape-rendering="crispEdges"/><line x1="1816" y1="509" x2="1816" y2="528" stroke="#0000ff" stroke-width="2" shape-rendering="crispEdges"/><line x1="1816" y1="563" x2="1816" y2="598" stroke="#0000ff" stroke-width="2" shape-rendering="crispEdges"/><line x1="1038" y1="374" x2="1061" y2="374" stroke="#0000ff" stroke-width="2" shape-rendering="crispEdges"/><line x1="1044" y1="380" x2="1055" y2="380" stroke="#0000ff" stroke-width="2" shape-rendering="crispEdges"/><line x1="1036" y1="431" x2="1061" y2="431" stroke="#0000ff" stroke-width="2" shape-rendering="crispEdges"/><line x1="1042" y1="440" x2="1055" y2="440" stroke="#0000ff" stroke-width="2" shape-rendering="crispEdges"/><line x1="1108" y1="374" x2="1133" y2="374" stroke="#0000ff" stroke-width="2" shape-rendering="crispEdges"/><line x1="1108" y1="380" x2="1133" y2="380" stroke="#0000ff" stroke-width="2" shape-rendering="crispEdges"/><line x1="1108" y1="431" x2="1133" y2="431" stroke="#0000ff" stroke-width="2" shape-rendering="crispEdges"/><line x1="1114" y1="440" x2="1127" y2="440" stroke="#0000ff" stroke-width="2" shape-rendering="crispEdges"/><line x1="1180" y1="590" x2="1205" y2="590" stroke="#0000ff" stroke-width="2" shape-rendering="crispEdges"/><line x1="1180" y1="596" x2="1205" y2="596" stroke="#0000ff" stroke-width="2" shape-rendering="crispEdges"/><line x1="1180" y1="647" x2="1205" y2="647" stroke="#0000ff" stroke-width="2" shape-rendering="crispEdges"/><line x1="1186" y1="656" x2="1199" y2="656" stroke="#0000ff" stroke-width="2" shape-rendering="crispEdges"/><line x1="1396" y1="397" x2="1421" y2="397" stroke="#0000ff" stroke-width="2" shape-rendering="crispEdges"/><line x1="1396" y1="403" x2="1421" y2="403" stroke="#0000ff" stroke-width="2" shape-rendering="crispEdges"/><line x1="1396" y1="347" x2="1421" y2="347" stroke="#0000ff" stroke-width="2" shape-rendering="crispEdges"/><line x1="1402" y1="338" x2="1415" y2="338" stroke="#0000ff" stroke-width="2" shape-rendering="crispEdges"/><line x1="1360" y1="647" x2="1385" y2="647" stroke="#0000ff" stroke-width="2" shape-rendering="crispEdges"/><line x1="1366" y1="656" x2="1379" y2="656" stroke="#0000ff" stroke-width="2" shape-rendering="crispEdges"/><line x1="1576" y1="598" x2="1601" y2="598" stroke="#0000ff" stroke-width="2" shape-rendering="crispEdges"/><line x1="1582" y1="607" x2="1595" y2="607" stroke="#0000ff" stroke-width="2" shape-rendering="crispEdges"/><line x1="1696" y1="542" x2="1721" y2="542" stroke="#0000ff" stroke-width="2" shape-rendering="crispEdges"/><line x1="1696" y1="548" x2="1721" y2="548" stroke="#0000ff" stroke-width="2" shape-rendering="crispEdges"/><line x1="1696" y1="598" x2="1721" y2="598" stroke="#0000ff" stroke-width="2" shape-rendering="crispEdges"/><line x1="1702" y1="607" x2="1715" y2="607" stroke="#0000ff" stroke-width="2" shape-rendering="crispEdges"/><line x1="1804" y1="598" x2="1829" y2="598" stroke="#0000ff" stroke-width="2" shape-rendering="crispEdges"/><line x1="1810" y1="607" x2="1823" y2="607" stroke="#0000ff" stroke-width="2" shape-rendering="crispEdges"/><line x1="1525" y1="485" x2="1525" y2="510" stroke="#0000ff" stroke-width="2" shape-rendering="crispEdges"/><line x1="1531" y1="485" x2="1531" y2="510" stroke="#0000ff" stroke-width="2" shape-rendering="crispEdges"/><rect x="1312" y="461" width="120" height="120" fill="none" stroke="#0000ff" stroke-width="2" transform="translate(0,0)" shape-rendering="crispEdges"/><polyline points="1192.0,371.0 1185.0,374.3 1200.0,380.2 1185.0,386.5 1200.0,392.5 1185.0,398.8 1200.0,404.7 1192.0,408.0" fill="none" stroke="#0000ff" stroke-width="2" stroke-linejoin="miter"/><polyline points="1192.0,466.0 1185.0,469.3 1200.0,475.2 1185.0,481.5 1200.0,487.5 1185.0,493.8 1200.0,499.7 1192.0,503.0" fill="none" stroke="#0000ff" stroke-width="2" stroke-linejoin="miter"/><polyline points="1816.0,528.0 1809.0,531.1 1824.0,536.8 1809.0,542.7 1824.0,548.3 1809.0,554.2 1824.0,559.9 1816.0,563.0" fill="none" stroke="#0000ff" stroke-width="2" stroke-linejoin="miter"/><polygon points="1574,539 1603,539 1588.5,551" fill="#0000ff"/><rect x="1575" y="550" width="27" height="5" fill="#0000ff" /><polygon points="1642,497 1656,484 1656,511" fill="#0000ff"/><rect x="1638" y="484" width="5" height="27" fill="#0000ff" /><circle cx="1120.5" cy="329.5" r="5.3" fill="#ff0000"/><circle cx="1192.5" cy="329.5" r="5.3" fill="#ff0000"/><circle cx="1336.5" cy="425.5" r="5.3" fill="#ff0000"/><circle cx="1192.5" cy="437.5" r="5.3" fill="#ff0000"/><circle cx="1192.5" cy="545.5" r="5.3" fill="#ff0000"/><circle cx="1264.5" cy="545.5" r="5.3" fill="#ff0000"/><circle cx="1480.5" cy="497.5" r="5.3" fill="#ff0000"/><circle cx="1480.5" cy="545.5" r="5.3" fill="#ff0000"/><circle cx="1588.5" cy="497.5" r="5.3" fill="#ff0000"/><circle cx="1708.5" cy="497.5" r="5.3" fill="#ff0000"/><circle cx="1804.5" cy="497.5" r="5.3" fill="#ff0000"/><text x="1009" y="370" font-family="Liberation Mono" font-size="19.5" fill="#008000" text-anchor="start" font-weight="normal" >9V</text><text x="1009" y="391" font-family="Liberation Mono" font-size="19.5" fill="#008000" text-anchor="start" font-weight="normal" >V1</text><text x="1066" y="370" font-family="Liberation Mono" font-size="19.5" fill="#008000" text-anchor="start" font-weight="normal" >10u</text><text x="1100" y="391" font-family="Liberation Mono" font-size="19.5" fill="#008000" text-anchor="end" font-weight="normal" >C3</text><text x="1204" y="384" font-family="Liberation Mono" font-size="19.5" fill="#008000" text-anchor="start" font-weight="normal" >1k</text><text x="1204" y="405" font-family="Liberation Mono" font-size="19.5" fill="#008000" text-anchor="start" font-weight="normal" >R3</text><text x="1204" y="480" font-family="Liberation Mono" font-size="19.5" fill="#008000" text-anchor="start" font-weight="normal" >10k</text><text x="1204" y="502" font-family="Liberation Mono" font-size="19.5" fill="#008000" text-anchor="start" font-weight="normal" >R2</text><text x="1387" y="394" font-family="Liberation Mono" font-size="19.5" fill="#008000" text-anchor="end" font-weight="normal" >10n</text><text x="1387" y="415" font-family="Liberation Mono" font-size="19.5" fill="#008000" text-anchor="end" font-weight="normal" >C1</text><text x="1138" y="587" font-family="Liberation Mono" font-size="19.5" fill="#008000" text-anchor="start" font-weight="normal" >10n</text><text x="1172" y="607" font-family="Liberation Mono" font-size="19.5" fill="#008000" text-anchor="end" font-weight="normal" >C2</text><text x="1305" y="612" font-family="Liberation Mono" font-size="19.5" fill="#008000" text-anchor="start" font-weight="normal" >X1</text><text x="1516" y="455" font-family="Liberation Mono" font-size="19.5" fill="#008000" text-anchor="start" font-weight="normal" >10u</text><text x="1516" y="475" font-family="Liberation Mono" font-size="19.5" fill="#008000" text-anchor="start" font-weight="normal" >C4</text><text x="1639" y="529" font-family="Liberation Mono" font-size="19.5" fill="#008000" text-anchor="start" font-weight="normal" >D2</text><text x="1607" y="559" font-family="Liberation Mono" font-size="19.5" fill="#008000" text-anchor="start" font-weight="normal" >D1</text><text x="1726" y="538" font-family="Liberation Mono" font-size="19.5" fill="#008000" text-anchor="start" font-weight="normal" >10u</text><text x="1726" y="559" font-family="Liberation Mono" font-size="19.5" fill="#008000" text-anchor="start" font-weight="normal" >C5</text><text x="1828" y="540" font-family="Liberation Mono" font-size="19.5" fill="#008000" text-anchor="start" font-weight="normal" >1k</text><text x="1828" y="561" font-family="Liberation Mono" font-size="19.5" fill="#008000" text-anchor="start" font-weight="normal" >R4</text><text x="1287" y="456" font-family="Liberation Sans" font-size="14" fill="#ff0000" text-anchor="start" font-weight="normal" >RESET</text><text x="1367" y="456" font-family="Liberation Sans" font-size="14" fill="#ff0000" text-anchor="start" font-weight="normal" >VCC</text><text x="1415" y="456" font-family="Liberation Sans" font-size="14" fill="#ff0000" text-anchor="start" font-weight="normal" >CONT</text><text x="1318" y="502" font-family="Liberation Sans" font-size="14" fill="#ff0000" text-anchor="start" font-weight="normal" >THRES</text><text x="1428" y="502" font-family="Liberation Sans" font-size="14" fill="#ff0000" text-anchor="end" font-weight="normal" >OUT</text><text x="1318" y="551" font-family="Liberation Sans" font-size="14" fill="#ff0000" text-anchor="start" font-weight="normal" >TRIG</text><text x="1426" y="551" font-family="Liberation Sans" font-size="14" fill="#ff0000" text-anchor="end" font-weight="normal" >DISCH</text><text x="1377" y="595" font-family="Liberation Sans" font-size="14" fill="#ff0000" text-anchor="start" font-weight="normal" >GND</text><text x="1192.5" y="436" font-family="Liberation Sans" font-size="17.5" fill="#0000ff" text-anchor="start" font-weight="normal" textLength="24.5" lengthAdjust="spacingAndGlyphs">DC</text><text x="1480" y="495.3" font-family="Liberation Sans" font-size="17.5" fill="#0000ff" text-anchor="start" font-weight="normal" textLength="24.5" lengthAdjust="spacingAndGlyphs">SQ</text><text x="1480.5" y="543.5" font-family="Liberation Sans" font-size="17.5" fill="#0000ff" text-anchor="start" font-weight="normal" textLength="24.5" lengthAdjust="spacingAndGlyphs">DC</text><text x="1804.5" y="495.8" font-family="Liberation Sans" font-size="17.5" fill="#0000ff" text-anchor="start" font-weight="normal" textLength="36" lengthAdjust="spacingAndGlyphs">NEG</text><rect x="844.5" y="9.5" width="31" height="17" rx="3" fill="#c5d3e3" stroke="#7b8aa6" stroke-width="1"/><rect x="845.5" y="10.5" width="29" height="15" rx="2" fill="none" stroke="#dde6f0" stroke-opacity="0.8" stroke-width="1"/><rect x="855.0" y="17.5" width="10" height="4" rx="1" fill="#f4f4f4" stroke="#3a4152" stroke-width="1"/><rect x="878.5" y="9.5" width="31" height="17" rx="3" fill="#c5d3e3" stroke="#7b8aa6" stroke-width="1"/><rect x="879.5" y="10.5" width="29" height="15" rx="2" fill="none" stroke="#dde6f0" stroke-opacity="0.8" stroke-width="1"/><rect x="889.0" y="13.5" width="10" height="8" rx="1.5" fill="#f4f4f4" stroke="#3a4152" stroke-width="1"/><rect x="891.5" y="16.5" width="5" height="2" fill="#8090a8" stroke="#3a4152" stroke-width="1"/><rect x="912.5" y="9.5" width="31" height="17" rx="3" fill="#c5d3e3" stroke="#7b8aa6" stroke-width="1"/><rect x="913.5" y="10.5" width="29" height="15" rx="2" fill="none" stroke="#dde6f0" stroke-opacity="0.8" stroke-width="1"/><path d="M922.5,13.5 H926.5 L928.0,15.5 L929.5,13.5 H933.5 L930.2,17.8 L933.5,22.5 H929.5 L928.0,20 L926.5,22.5 H922.5 L925.8,17.8 Z" fill="#f4f4f4" stroke="#3a4152" stroke-width="1" stroke-linejoin="round"/><rect x="1797.5" y="9.5" width="31" height="17" rx="3" fill="url(#cb1797)" stroke="#4b5d75" stroke-width="1"/><rect x="1798.5" y="10.5" width="29" height="15" rx="2" fill="none" stroke="#dfe9f5" stroke-opacity="0.7" stroke-width="1"/><rect x="1808.0" y="17.5" width="10" height="4" rx="1" fill="#f4f4f4" stroke="#3a4152" stroke-width="1"/><rect x="1831.5" y="9.5" width="31" height="17" rx="3" fill="url(#cb1831)" stroke="#4b5d75" stroke-width="1"/><rect x="1832.5" y="10.5" width="29" height="15" rx="2" fill="none" stroke="#dfe9f5" stroke-opacity="0.7" stroke-width="1"/><rect x="1842.0" y="13.5" width="10" height="8" rx="1.5" fill="#f4f4f4" stroke="#3a4152" stroke-width="1"/><rect x="1844.5" y="16.5" width="5" height="2" fill="#8090a8" stroke="#3a4152" stroke-width="1"/><rect x="1865.5" y="9.5" width="31" height="17" rx="3" fill="url(#cr1865)" stroke="#4d1a1a" stroke-width="1"/><rect x="1866.5" y="10.5" width="29" height="15" rx="2" fill="none" stroke="#f0c0b0" stroke-opacity="0.6" stroke-width="1"/><path d="M1875.5,13.5 H1879.5 L1881.0,15.5 L1882.5,13.5 H1886.5 L1883.2,17.8 L1886.5,22.5 H1882.5 L1881.0,20 L1879.5,22.5 H1875.5 L1878.8,17.8 Z" fill="#f4f4f4" stroke="#3a4152" stroke-width="1" stroke-linejoin="round"/><rect x="11" y="10" width="16" height="16" fill="#000"/><rect x="12" y="11" width="14" height="14" fill="#fff"/><rect x="12" y="11" width="14" height="2" fill="#0000ff"/><rect x="12" y="13" width="14" height="1" fill="#000"/><rect x="15" y="17" width="10" height="7" fill="#000"/><rect x="16" y="18" width="8" height="5" fill="#00ffff"/><path d="M16.5,21.5 Q20,17.5 23.5,21.5" fill="none" stroke="#000" stroke-width="1"/><rect x="16" y="15" width="8" height="1" fill="#777"/><rect x="13" y="18" width="1" height="1" fill="#333"/><rect x="13" y="20" width="1" height="1" fill="#333"/><rect x="13" y="22" width="1" height="1" fill="#333"/><rect x="964" y="10" width="16" height="16" fill="#000"/><rect x="965" y="11" width="14" height="14" fill="#d4d0c4"/><path d="M965,13.5 H979 M965,17.5 H979 M965,21.5 H979 M967.5,11 V25 M971.5,11 V25 M975.5,11 V25" stroke="#ece8dc" stroke-width="1"/><path d="M969.5,11 V23 M966,22.5 H975 M969.5,11.5 H977 M977,11.5 L974.5,21 M966,15.5 H969" stroke="#4a7ae0" stroke-width="1.2" fill="none"/><circle cx="967.5" cy="14.5" r="1" fill="#0000ff"/><circle cx="966.5" cy="18.5" r="1.1" fill="#0000ff"/><circle cx="966.3" cy="22" r="1" fill="#0000ff"/><circle cx="972.3" cy="17.5" r="1" fill="#0000ff"/><circle cx="974.5" cy="15" r="1" fill="#0000ff"/><circle cx="974.5" cy="19" r="1" fill="#0000ff"/><circle cx="976" cy="17.5" r="0.9" fill="#0000ff"/><path d="M970,15.5 H972.5 M976.5,13.5 H979 M976,15.5 H978.5 M976,19.5 H978.5" stroke="#ff0000" stroke-width="1.2"/><rect x="965" y="23.5" width="9" height="1.5" fill="#f0f0f0"/><rect x="975" y="24" width="4" height="1" fill="#f8f8f8"/><text x="31" y="22.5" font-family="Liberation Sans" font-size="12.2" fill="#8a9198" text-anchor="start" font-weight="normal" textLength="92.5" lengthAdjust="spacingAndGlyphs">Transient Analysis</text><text x="984" y="22.5" font-family="Liberation Sans" font-size="12.2" fill="#000000" text-anchor="start" font-weight="normal" textLength="118.5" lengthAdjust="spacingAndGlyphs">C:\MC12\DATA\555.cir</text><rect x="11" y="787" width="6" height="17" fill="#f4f4f4" /><rect x="11" y="787" width="1" height="17" fill="#ffffff" /><rect x="17" y="787" width="82" height="17" fill="#6a6a6a" /><rect x="18" y="788" width="15" height="15" fill="#f0f0f0"/><rect x="18" y="788" width="15" height="1" fill="#ffffff"/><rect x="18" y="788" width="1" height="15" fill="#ffffff"/><rect x="18" y="801" width="15" height="2" fill="#8a8a8a"/><rect x="31" y="788" width="2" height="15" fill="#8a8a8a"/><rect x="34" y="788" width="15" height="15" fill="#f0f0f0"/><rect x="34" y="788" width="15" height="1" fill="#ffffff"/><rect x="34" y="788" width="1" height="15" fill="#ffffff"/><rect x="34" y="801" width="15" height="2" fill="#8a8a8a"/><rect x="47" y="788" width="2" height="15" fill="#8a8a8a"/><rect x="50" y="788" width="15" height="15" fill="#f0f0f0"/><rect x="50" y="788" width="15" height="1" fill="#ffffff"/><rect x="50" y="788" width="1" height="15" fill="#ffffff"/><rect x="50" y="801" width="15" height="2" fill="#8a8a8a"/><rect x="63" y="788" width="2" height="15" fill="#8a8a8a"/><rect x="67" y="788" width="15" height="15" fill="#f0f0f0"/><rect x="67" y="788" width="15" height="1" fill="#ffffff"/><rect x="67" y="788" width="1" height="15" fill="#ffffff"/><rect x="67" y="801" width="15" height="2" fill="#8a8a8a"/><rect x="80" y="788" width="2" height="15" fill="#8a8a8a"/><rect x="83" y="788" width="15" height="15" fill="#f0f0f0"/><rect x="83" y="788" width="15" height="1" fill="#ffffff"/><rect x="83" y="788" width="1" height="15" fill="#ffffff"/><rect x="83" y="801" width="15" height="2" fill="#8a8a8a"/><rect x="96" y="788" width="2" height="15" fill="#8a8a8a"/><path d="M23,795.5 h6 l-3,3 z" fill="#000"/><rect x="38" y="791.0" width="1.5" height="9" fill="#000"/><path d="M39.5,795.5 L44.5,791.0 V800.0 Z" fill="#000"/><path d="M55,795.5 L60,791.0 V800.0 Z" fill="#000"/><path d="M77,795.5 L72,791.0 V800.0 Z" fill="#000"/><path d="M92.5,795.5 L87.5,791.0 V800.0 Z" fill="#000"/><rect x="93" y="791.0" width="1.5" height="9" fill="#000"/><path d="M98,787.5 L106,803.5 L139,803.5 L146.5,787.5" fill="#f4f4f4" stroke="none"/><path d="M98,787 L106,803.5 M106,803.5 H139" stroke="#000" stroke-width="1" fill="none"/><path d="M139,803.5 L146.5,787.5" stroke="#000" stroke-width="1" fill="none"/><path d="M106,803.5 H139" stroke="#a0a0a0" stroke-width="1"/><rect x="146" y="787" width="782" height="1" fill="#000" /><text x="106.5" y="799" font-family="Liberation Sans" font-size="12" fill="#000" text-anchor="start" font-weight="bold" textLength="30.5" lengthAdjust="spacingAndGlyphs">MAIN</text><rect x="927" y="787" width="17" height="7" fill="#f0f0f0"/><rect x="927" y="787" width="17" height="1" fill="#ffffff"/><rect x="927" y="792" width="17" height="2" fill="#8a8a8a"/><rect x="942" y="787" width="2" height="7" fill="#8a8a8a"/><rect x="964" y="788" width="4" height="16" fill="#f4f4f4" /><rect x="964" y="788" width="1" height="16" fill="#ffffff" /><rect x="968" y="788" width="82" height="17" fill="#6a6a6a" /><rect x="969" y="789" width="15" height="15" fill="#f0f0f0"/><rect x="969" y="789" width="15" height="1" fill="#ffffff"/><rect x="969" y="789" width="1" height="15" fill="#ffffff"/><rect x="969" y="802" width="15" height="2" fill="#8a8a8a"/><rect x="982" y="789" width="2" height="15" fill="#8a8a8a"/><rect x="985" y="789" width="15" height="15" fill="#f0f0f0"/><rect x="985" y="789" width="15" height="1" fill="#ffffff"/><rect x="985" y="789" width="1" height="15" fill="#ffffff"/><rect x="985" y="802" width="15" height="2" fill="#8a8a8a"/><rect x="998" y="789" width="2" height="15" fill="#8a8a8a"/><rect x="1002" y="789" width="15" height="15" fill="#f0f0f0"/><rect x="1002" y="789" width="15" height="1" fill="#ffffff"/><rect x="1002" y="789" width="1" height="15" fill="#ffffff"/><rect x="1002" y="802" width="15" height="2" fill="#8a8a8a"/><rect x="1015" y="789" width="2" height="15" fill="#8a8a8a"/><rect x="1018" y="789" width="15" height="15" fill="#f0f0f0"/><rect x="1018" y="789" width="15" height="1" fill="#ffffff"/><rect x="1018" y="789" width="1" height="15" fill="#ffffff"/><rect x="1018" y="802" width="15" height="2" fill="#8a8a8a"/><rect x="1031" y="789" width="2" height="15" fill="#8a8a8a"/><rect x="1034" y="789" width="15" height="15" fill="#f0f0f0"/><rect x="1034" y="789" width="15" height="1" fill="#ffffff"/><rect x="1034" y="789" width="1" height="15" fill="#ffffff"/><rect x="1034" y="802" width="15" height="2" fill="#8a8a8a"/><rect x="1047" y="789" width="2" height="15" fill="#8a8a8a"/><path d="M974,796.5 h6 l-3,3 z" fill="#000"/><rect x="989" y="792.0" width="1.5" height="9" fill="#000"/><path d="M990.5,796.5 L995.5,792.0 V801.0 Z" fill="#000"/><path d="M1007,796.5 L1012,792.0 V801.0 Z" fill="#000"/><path d="M1028,796.5 L1023,792.0 V801.0 Z" fill="#000"/><path d="M1043.5,796.5 L1038.5,792.0 V801.0 Z" fill="#000"/><rect x="1044" y="792.0" width="1.5" height="9" fill="#000"/><rect x="1093" y="788" width="298" height="1" fill="#000" /><path d="M1093,788.5 L1085,803.5 L1199,803.5 L1206,788.5 Z" fill="#f0f0f0"/><path d="M1049,788 L1057,803.5 L1085,803.5 L1093.2,788.5 Z" fill="#f8f8f8"/><rect x="1093" y="788" width="298" height="1" fill="#000" /><path d="M1093,803.5 H1119 M1127,803.5 H1168 M1176,803.5 H1199 M1057,803.5 H1085" stroke="#a8a8a8" stroke-width="1"/><path d="M1049,788 L1057,803.5 M1085,803.5 L1093.2,788.3 M1088.6,796.5 L1092.5,803.8 M1119.2,803.8 L1123.6,795 M1120.3,788.4 L1126.9,803.8 M1168.3,803.8 L1172,796.5 M1169.1,788.4 L1175.7,803.8 M1199.1,803.8 L1206.1,788.4" stroke="#000" stroke-width="1.1" fill="none"/><text x="1058" y="799.5" font-family="Liberation Sans" font-size="12" fill="#000" text-anchor="start" font-weight="bold" textLength="26" lengthAdjust="spacingAndGlyphs">Main</text><text x="1095" y="799.5" font-family="Liberation Sans" font-size="12" fill="#000" text-anchor="start" font-weight="normal" textLength="20.5" lengthAdjust="spacingAndGlyphs">Text</text><text x="1130.5" y="799.5" font-family="Liberation Sans" font-size="12" fill="#000" text-anchor="start" font-weight="normal" textLength="33" lengthAdjust="spacingAndGlyphs">Models</text><text x="1178.5" y="799.5" font-family="Liberation Sans" font-size="12" fill="#000" text-anchor="start" font-weight="normal" textLength="17" lengthAdjust="spacingAndGlyphs">Info</text><rect x="1390" y="788" width="5" height="16" fill="#000"/><rect x="1391" y="789" width="3" height="14" fill="#f0f0f0"/><rect x="1393" y="789" width="1" height="14" fill="#8a8a8a"/><rect x="1395" y="788" width="486" height="16" fill="url(#chk)" /><rect x="1395" y="788" width="16" height="16" fill="#f0f0f0"/><rect x="1395" y="788" width="16" height="1" fill="#ffffff"/><rect x="1395" y="788" width="1" height="16" fill="#ffffff"/><rect x="1395" y="803" width="16" height="1" fill="#8a8a8a"/><rect x="1410" y="788" width="1" height="16" fill="#8a8a8a"/><path d="M1400,796 L1404,792 V800 Z" fill="#000"/><rect x="1411" y="788" width="127" height="16" fill="#f0f0f0"/><rect x="1411" y="788" width="127" height="1" fill="#ffffff"/><rect x="1411" y="788" width="1" height="16" fill="#ffffff"/><rect x="1411" y="803" width="127" height="1" fill="#8a8a8a"/><rect x="1537" y="788" width="1" height="16" fill="#8a8a8a"/><rect x="1866" y="788" width="15" height="16" fill="#f0f0f0"/><rect x="1866" y="788" width="15" height="1" fill="#ffffff"/><rect x="1866" y="788" width="1" height="16" fill="#ffffff"/><rect x="1866" y="803" width="15" height="1" fill="#8a8a8a"/><rect x="1880" y="788" width="1" height="16" fill="#8a8a8a"/><path d="M1875,796 L1871,792 V800 Z" fill="#000"/><rect x="1881" y="89" width="16" height="699" fill="url(#chk)" /><rect x="1881" y="89" width="16" height="4" fill="#ffffff" /><rect x="1881" y="93" width="17" height="1" fill="#6a6a6a" /><rect x="1881" y="94" width="16" height="16" fill="#f0f0f0"/><rect x="1881" y="94" width="16" height="1" fill="#ffffff"/><rect x="1881" y="94" width="1" height="16" fill="#ffffff"/><rect x="1881" y="109" width="16" height="1" fill="#8a8a8a"/><rect x="1896" y="94" width="1" height="16" fill="#8a8a8a"/><path d="M1889,99.5 L1893,103.5 H1885 Z" fill="#000"/><rect x="1881" y="110" width="16" height="155" fill="#f0f0f0"/><rect x="1881" y="110" width="16" height="1" fill="#ffffff"/><rect x="1881" y="110" width="1" height="155" fill="#ffffff"/><rect x="1881" y="264" width="16" height="1" fill="#8a8a8a"/><rect x="1896" y="110" width="1" height="155" fill="#8a8a8a"/><rect x="1881" y="772" width="16" height="16" fill="#f0f0f0"/><rect x="1881" y="772" width="16" height="1" fill="#ffffff"/><rect x="1881" y="772" width="1" height="16" fill="#ffffff"/><rect x="1881" y="787" width="16" height="1" fill="#8a8a8a"/><rect x="1896" y="772" width="1" height="16" fill="#8a8a8a"/><path d="M1889,783.5 L1893,779.5 H1885 Z" fill="#000"/><rect x="1881" y="788" width="16" height="16" fill="#f0f0f0" /><rect x="1881" y="788" width="17" height="1" fill="#6a6a6a" /><rect x="1881" y="788" width="1" height="16" fill="#6a6a6a" /><rect x="58" y="33" width="22" height="22" fill="#f4f4f4"/><path d="M58.5,55 V33.5 H80" stroke="#ffffff" stroke-width="1" fill="none"/><path d="M58,54.5 H79.5 V33" stroke="#a0a0a0" stroke-width="1" fill="none"/><rect x="80" y="33" width="16" height="22" fill="#f4f4f4"/><path d="M80.5,55 V33.5 H96" stroke="#ffffff" stroke-width="1" fill="none"/><path d="M80,54.5 H95.5 V33" stroke="#a0a0a0" stroke-width="1" fill="none"/><rect x="142" y="33" width="22" height="22" fill="url(#chk2)"/><path d="M142.5,55 V33.5 H164" stroke="#a0a0a0" stroke-width="1" fill="none"/><path d="M143,54.5 H163.5 V34" stroke="#ffffff" stroke-width="1" fill="none"/><rect x="489" y="33" width="22" height="22" fill="url(#chk2)"/><path d="M489.5,55 V33.5 H511" stroke="#a0a0a0" stroke-width="1" fill="none"/><path d="M490,54.5 H510.5 V34" stroke="#ffffff" stroke-width="1" fill="none"/><rect x="512" y="33" width="22" height="22" fill="url(#chk2)"/><path d="M512.5,55 V33.5 H534" stroke="#a0a0a0" stroke-width="1" fill="none"/><path d="M513,54.5 H533.5 V34" stroke="#ffffff" stroke-width="1" fill="none"/><rect x="535" y="33" width="22" height="22" fill="url(#chk2)"/><path d="M535.5,55 V33.5 H557" stroke="#a0a0a0" stroke-width="1" fill="none"/><path d="M536,54.5 H556.5 V34" stroke="#ffffff" stroke-width="1" fill="none"/><g transform="translate(15,36)"><path d="M4.5,0.8 V13.2 L7.3,10.6 L9.6,15.2 L11.4,14.3 L9.2,9.7 L12.9,9.6 Z" fill="#fff" stroke="#46638f" stroke-width="1" stroke-linejoin="round"/></g><g transform="translate(38,36)"><path d="M3.6,9.2 V5.6 a1,1 0 0 1 2,0 V8 V3.3 a1,1 0 0 1 2,0 V7.6 V2.6 a1,1 0 0 1 2,0 V7.6 V3.8 a1,1 0 0 1 2,0 V8.2 V6 a1,1 0 0 1 2,0 V10.5 q0,4 -4.5,4.5 h-1.5 q-2.2,0 -3.4,-2 l-1.8,-2.8 a1,1 0 0 1 1.6,-1 z" fill="#f6f6f6" stroke="#5a5a5a" stroke-width="0.9" stroke-linejoin="round"/></g><g transform="translate(62,36)"><circle cx="11" cy="5.6" r="4.6" fill="#dbe7f8" stroke="#5a8ad0" stroke-width="1"/><rect x="1.5" y="3.5" width="8.5" height="8.5" fill="#c8dbf5" stroke="#4a7ac0" stroke-width="1"/><path d="M5.5,7.5 v6 a3.5,1.5 0 0 0 7,0 v-6" fill="#e4eefc" stroke="#4a7ac0" stroke-width="1"/><ellipse cx="9" cy="7.5" rx="3.5" ry="1.5" fill="#f8fbff" stroke="#4a7ac0" stroke-width="1"/></g><g transform="translate(80,36)"><path d="M4,6 h8 l-4,4 z" fill="#000"/></g><g transform="translate(99,36)"><rect x="0.5" y="1.5" width="15" height="13" rx="1" fill="#fff" stroke="#a0a0a0" stroke-width="1"/><rect x="2" y="3" width="12" height="10" fill="url(#gsky)"/><path d="M2,6.5 Q5,6.5 8,9.5 T14,11 V13 H2 Z" fill="#2e7e50"/><rect x="2" y="11" width="12" height="2" fill="#2a8ae0"/></g><g transform="translate(122,36)"><rect x="0.5" y="0.5" width="15" height="14" fill="url(#gfr)" stroke="#34455f" stroke-width="1"/><path d="M1,7.3 L7.3,2 L12,6.5 L15,4.4" stroke="#3a6ad0" fill="none" stroke-width="1.1"/><circle cx="7.3" cy="8.2" r="3.4" fill="url(#gsphg)" stroke="#7a7a7a" stroke-width="1.1"/><path d="M10,11 L13.3,13.6" stroke="#e8961e" stroke-width="2.6"/></g><g transform="translate(146,36)"><rect x="0.5" y="1.5" width="15" height="14" fill="url(#gfr)" stroke="#34455f" stroke-width="1"/><path d="M1,8.1 L7.5,2.3 L10.6,8.6 L15,5" stroke="#3a6ad0" fill="none" stroke-width="1.1"/><path d="M4.3,2 V10 M12.5,2 V10" stroke="#000" stroke-width="1.3" stroke-dasharray="1.6 1"/><path d="M3,11.5 H5 M6.5,11.5 H7.5 M9,11.5 H14 M3,13.5 H5 M6.5,13.5 H7.5 M9,13.5 H14" stroke="#44546e" stroke-width="1"/></g><g transform="translate(168,36)"><rect x="0.5" y="0.5" width="15" height="14" fill="url(#gfr)" stroke="#34455f" stroke-width="1"/><path d="M2,13 Q9,12 14,4" stroke="#f08a20" fill="none" stroke-width="1.2"/><path d="M1.5,4 h4.5 M10,4 h4.5 M1.2,4 L4.2,1.3 M1.2,4 L4.2,6.7 M14.8,4 L11.8,1.3 M14.8,4 L11.8,6.7" stroke="#3a7ad8" stroke-width="1.7" stroke-linecap="round"/></g><g transform="translate(191,36)"><rect x="0.5" y="0.5" width="15" height="14" fill="url(#gfr)" stroke="#34455f" stroke-width="1"/><path d="M6,13 Q11,11 14,3" stroke="#f08a20" fill="none" stroke-width="1.2"/><path d="M4,1 V15 M4,0.8 L1.3,3.8 M4,0.8 L6.7,3.8 M4,15.2 L1.3,12.2 M4,15.2 L6.7,12.2" stroke="#3a7ad8" stroke-width="1.7" stroke-linecap="round"/></g><g transform="translate(214,36)"><rect x="0.5" y="0.5" width="15" height="14" fill="url(#gfr)" stroke="#34455f" stroke-width="1"/><path d="M2,13 Q10,12 14,3" stroke="#f08a20" fill="none" stroke-width="1.2"/><path d="M2.5,3 L7,7" stroke="#3a7ad8" stroke-width="1.2"/><path d="M9,9 L4.5,8.5 L8.5,4.5 Z" fill="#3a7ad8"/></g><g transform="translate(236,36)"><rect x="0.5" y="0.5" width="15" height="14" fill="url(#gfr)" stroke="#34455f" stroke-width="1"/><path d="M2,13 Q10,12 14,3" stroke="#f08a20" fill="none" stroke-width="1.2"/><text x="0.5" y="11.5" font-family="Liberation Serif" font-style="italic" font-weight="bold" font-size="11" fill="#000">fx</text></g><g transform="translate(260,36)"><path d="M1.2,1.2 H14.2 V5.4 H12.9 Q12.5,3.3 10.6,3.3 H9.3 V12.0 Q9.3,12.7 11.0,12.7 V14.2 H4.4 V12.7 Q6.1,12.7 6.1,12.0 V3.3 H4.8 Q2.9,3.3 2.5,5.4 H1.2 Z" fill="#000"/></g><g transform="translate(288,36)"><rect x="1.5" y="6.5" width="11" height="8" fill="#f2f6fc" stroke="#3a4a64" stroke-width="1"/><rect x="2" y="7" width="10" height="2" fill="#8fb0e8"/><path d="M3,10.5 h2 M6,10.5 h5 M3,12.5 h2 M6,12.5 h5" stroke="#6080c0" stroke-width="1"/><path d="M4.5,5 L8.5,1.5 h4.5 q1.5,0.5 1,2.5 q-0.2,2 -2,2 h-3 L7,8.5 Z" fill="url(#gyel)" stroke="#a07818" stroke-width="0.6"/><path d="M5,5 L9,8 M6,3.8 L10,7" stroke="#8a6a18" stroke-width="0.5"/><rect x="14" y="1" width="1.8" height="6" fill="#3aa040"/></g><g transform="translate(316,36)"><path d="M5,2 L11.5,7.5 L5,13 Z" fill="url(#ggrn)" stroke="#1e6a1e" stroke-width="0.5"/></g><g transform="translate(339,36)"><rect x="4.5" y="3.5" width="8" height="8" fill="url(#ggray)" stroke="#b0b0b0" stroke-width="1"/></g><g transform="translate(362,36)"><rect x="4.5" y="3.5" width="2" height="8" fill="url(#ggray)" stroke="#b0b0b0" stroke-width="1"/><rect x="8.5" y="3.5" width="2" height="8" fill="url(#ggray)" stroke="#b0b0b0" stroke-width="1"/></g><g transform="translate(390,36)"><rect x="0.5" y="0.5" width="15" height="14" fill="url(#gbeige)" stroke="#8a8a8a" stroke-width="1"/><path d="M1,7.5 H15 M8.5,1 V14" stroke="#c8c4b0" stroke-width="1"/><path d="M1.5,14 L14.5,1.5" stroke="#e04040" stroke-width="1.2"/><rect x="2" y="10.5" width="3" height="3" fill="#e04040"/><rect x="7" y="5.5" width="3" height="3" fill="#e04040"/><rect x="11.5" y="1.5" width="3" height="3" fill="#e04040"/></g><g transform="translate(413,36)"><rect x="0.5" y="0.5" width="15" height="14" fill="url(#gbeige)" stroke="#8a8a8a" stroke-width="1"/><path d="M1,7.5 H15 M8.5,1 V14" stroke="#c8c4b0" stroke-width="1"/><path d="M1.5,14 L14.5,1.5" stroke="#e04040" stroke-width="1.2"/><rect x="4.5" y="9.5" width="3" height="3" fill="#fff" stroke="#e04040"/><rect x="10.5" y="3.5" width="3" height="3" fill="#fff" stroke="#e04040"/></g><g transform="translate(440,36)"><rect x="0.5" y="0.5" width="15" height="14" fill="url(#gfr)" stroke="#34455f" stroke-width="1"/><rect x="3" y="4" width="10" height="8" fill="#f8f0fc" stroke="#f08a10" stroke-width="1.8" stroke-dasharray="1.2 0.6"/></g><g transform="translate(463,36)"><rect x="0.5" y="0.5" width="15" height="14" fill="url(#gfr)" stroke="#34455f" stroke-width="1"/><path d="M3.5,13 V3 M3.5,13 H15" stroke="#9ab2da" fill="none"/><path d="M5,5 h3 M6.5,3.5 v3 M10,5 h3 M11.5,3.5 v3 M5,10 h3 M6.5,8.5 v3 M10,10 h3 M11.5,8.5 v3" stroke="#f08a10" stroke-width="1.1"/></g><g transform="translate(492,36)"><rect x="1.5" y="2.5" width="14" height="13" fill="url(#gfr)" stroke="#34455f" stroke-width="1"/><path d="M3.5,3.5 V13.5 H14" stroke="#9ab2da" fill="none"/><path d="M6.5,4 V12 M8.5,4 V12 M10.5,4 V12 M12.5,4 V12" stroke="#f08a10" stroke-width="1.1"/></g><g transform="translate(516,36)"><rect x="1.5" y="2.5" width="14" height="13" fill="url(#gfr)" stroke="#34455f" stroke-width="1"/><path d="M3.5,3.5 V13.5 H14" stroke="#9ab2da" fill="none"/><path d="M5,5.5 H14 M5,7.5 H14 M5,9.5 H14 M5,11.5 H14" stroke="#f08a10" stroke-width="1.1"/></g><g transform="translate(538,36)"><rect x="1.5" y="2.5" width="14" height="13" fill="url(#gfr)" stroke="#34455f" stroke-width="1"/><path d="M3.5,3.5 V13.5 H14" stroke="#9ab2da" fill="none"/><path d="M7.5,4 V12 M10.5,4 V12 M12.5,4 V12" stroke="#f08a10" stroke-width="1.1"/></g><g transform="translate(560,36)"><rect x="1.5" y="2.5" width="14" height="13" fill="url(#gfr)" stroke="#34455f" stroke-width="1"/><path d="M3.5,3.5 V13.5 H14" stroke="#9ab2da" fill="none"/><path d="M8.5,4 V12 M12,4 V12" stroke="#f08a10" stroke-width="1.1"/></g><g transform="translate(588,36)"><rect x="1.5" y="2.5" width="14" height="13" fill="url(#gfr)" stroke="#34455f" stroke-width="1"/><path d="M3.5,3.5 V13.5 H14" stroke="#9ab2da" fill="none"/><path d="M4,9 H15" stroke="#000" stroke-width="1.2"/></g><g transform="translate(612,36)"><rect x="1.5" y="2.5" width="14" height="13" fill="url(#gfr)" stroke="#34455f" stroke-width="1"/><path d="M3.5,3.5 V13.5 H14" stroke="#9ab2da" fill="none"/><path d="M9,3 V15 M3,8.5 H15" stroke="#000" stroke-width="1.1" stroke-dasharray="1.1 1.1"/></g><g transform="translate(639,36)"><circle cx="7.5" cy="7.5" r="6.8" fill="url(#gsph)" stroke="#707070" stroke-width="0.9"/><text x="7.5" y="11" text-anchor="middle" font-family="Liberation Serif" font-weight="bold" font-style="italic" font-size="12" fill="#000">x</text><path d="M12,12.5 h3 l-1.5,-2 z" fill="#f0a020"/></g><g transform="translate(662,36)"><circle cx="7.5" cy="7.5" r="6.8" fill="url(#gsph)" stroke="#707070" stroke-width="0.9"/><text x="7.5" y="10.5" text-anchor="middle" font-family="Liberation Serif" font-weight="bold" font-style="italic" font-size="12" fill="#000">y</text><path d="M12,12.5 h3 l-1.5,-2 z" fill="#f0a020"/></g><g transform="translate(686,36)"><circle cx="7.5" cy="7.5" r="6.8" fill="url(#gsph)" stroke="#707070" stroke-width="0.9"/><text x="7.5" y="11" text-anchor="middle" font-family="Liberation Serif" font-style="italic" font-size="10" fill="#000">fx</text><path d="M12,12.5 h3 l-1.5,-2 z" fill="#f0a020"/></g><g transform="translate(708,36)"><circle cx="7.5" cy="7.5" r="6.8" fill="url(#gsphg)" stroke="#707070" stroke-width="0.9"/><path d="M3.5,5.5 h8 M3,7.5 h9 M3.5,9.5 h8" stroke="#606060" stroke-width="1"/></g><g transform="translate(736,36)"><rect x="1.5" y="4.5" width="11" height="10" fill="#fff" stroke="#3a5a90" stroke-width="1"/><rect x="2" y="5" width="10" height="2" fill="#7aa0e0"/><path d="M2,9.5 h10 M2,12 h10 M5.5,7 v7 M9,7 v7" stroke="#8aaae0" stroke-width="1"/><path d="M8,9 L13.5,2.5 L15.5,4.5 L10,11 L7.5,11.5 Z" fill="#e8eef8" stroke="#4a6aa0" stroke-width="0.8"/></g><rect x="282" y="35" width="1" height="19" fill="#a8a8a8"/><rect x="283" y="35" width="1" height="19" fill="#ffffff"/><rect x="310" y="35" width="1" height="19" fill="#a8a8a8"/><rect x="311" y="35" width="1" height="19" fill="#ffffff"/><rect x="384" y="35" width="1" height="19" fill="#a8a8a8"/><rect x="385" y="35" width="1" height="19" fill="#ffffff"/><rect x="436" y="35" width="1" height="19" fill="#a8a8a8"/><rect x="437" y="35" width="1" height="19" fill="#ffffff"/><rect x="486" y="35" width="1" height="19" fill="#a8a8a8"/><rect x="487" y="35" width="1" height="19" fill="#ffffff"/><rect x="584" y="35" width="1" height="19" fill="#a8a8a8"/><rect x="585" y="35" width="1" height="19" fill="#ffffff"/><rect x="634" y="35" width="1" height="19" fill="#a8a8a8"/><rect x="635" y="35" width="1" height="19" fill="#ffffff"/><rect x="732" y="35" width="1" height="19" fill="#a8a8a8"/><rect x="733" y="35" width="1" height="19" fill="#ffffff"/><rect x="760" y="35" width="1" height="19" fill="#a8a8a8"/><rect x="761" y="35" width="1" height="19" fill="#ffffff"/><rect x="12" y="61" width="22" height="22" fill="url(#chk2)"/><path d="M12.5,83 V61.5 H34" stroke="#a0a0a0" stroke-width="1" fill="none"/><path d="M13,82.5 H33.5 V62" stroke="#ffffff" stroke-width="1" fill="none"/><rect x="369" y="61" width="22" height="22" fill="url(#chk2)"/><path d="M369.5,83 V61.5 H391" stroke="#a0a0a0" stroke-width="1" fill="none"/><path d="M370,82.5 H390.5 V62" stroke="#ffffff" stroke-width="1" fill="none"/><rect x="392" y="61" width="22" height="22" fill="url(#chk2)"/><path d="M392.5,83 V61.5 H414" stroke="#a0a0a0" stroke-width="1" fill="none"/><path d="M393,82.5 H413.5 V62" stroke="#ffffff" stroke-width="1" fill="none"/><g transform="translate(16,64)"><g transform="translate(0,-0.8)"><path d="M0.5,1 V15 M0.5,2.5 H15 M0.5,13.5 H15" stroke="#7a7a7a" stroke-width="1.1"/><rect x="1" y="3" width="14" height="10" fill="#fff"/><path d="M7.8,2.5 V14" stroke="#000" stroke-width="1.8" stroke-dasharray="2 1.3"/><path d="M1,8 H15" stroke="#118811" stroke-width="1.2"/><rect x="1" y="6.5" width="3" height="3" fill="#118811"/><rect x="12.5" y="6.5" width="3" height="3" fill="#118811"/><rect x="7" y="6.5" width="3" height="3" fill="#118811"/></g></g><g transform="translate(38,64)"><g transform="translate(0,-0.8)"><path d="M0.5,1 V15 M0.5,2.5 H15 M0.5,13.5 H15" stroke="#7a7a7a" stroke-width="1.1"/><rect x="1" y="3" width="14" height="10" fill="#fff"/><path d="M7.8,2.5 V14" stroke="#000" stroke-width="1.8" stroke-dasharray="2 1.3"/><path d="M1,8 H15" stroke="#118811" stroke-width="1.2"/><rect x="1" y="6.5" width="3" height="3" fill="#118811"/><rect x="12.5" y="6.5" width="3" height="3" fill="#118811"/></g></g><g transform="translate(61,64)"><g transform="translate(0,-0.8)"><path d="M0.5,1 V15 M0.5,2.5 H15 M0.5,13.5 H15" stroke="#7a7a7a" stroke-width="1.1"/><rect x="1" y="3" width="14" height="10" fill="#fff"/><path d="M7.8,2.5 V14" stroke="#000" stroke-width="1.8" stroke-dasharray="2 1.3"/><path d="M2,13 Q8,-2 15,13" stroke="#118811" fill="none" stroke-width="1.1"/></g></g><g transform="translate(84,64)"><g transform="translate(0,-0.8)"><path d="M0.5,1 V15 M0.5,2.5 H15 M0.5,13.5 H15" stroke="#7a7a7a" stroke-width="1.1"/><rect x="1" y="3" width="14" height="10" fill="#fff"/><path d="M7.8,2.5 V14" stroke="#000" stroke-width="1.8" stroke-dasharray="2 1.3"/><path d="M1,10 Q4,4 7,10 T15,6" stroke="#118811" fill="none" stroke-width="1.1"/></g></g><g transform="translate(107,64)"><g transform="translate(0,-0.8)"><path d="M0.5,1 V15 M0.5,2.5 H15 M0.5,13.5 H15" stroke="#7a7a7a" stroke-width="1.1"/><rect x="1" y="3" width="14" height="10" fill="#fff"/><path d="M7.8,2.5 V14" stroke="#000" stroke-width="1.8" stroke-dasharray="2 1.3"/><path d="M1,6 Q6,6 8,8 T15,10" stroke="#118811" fill="none" stroke-width="1.1"/></g></g><g transform="translate(130,64)"><g transform="translate(0,-0.8)"><path d="M0.5,1 V15 M0.5,2.5 H15 M0.5,13.5 H15" stroke="#7a7a7a" stroke-width="1.1"/><rect x="1" y="3" width="14" height="10" fill="#fff"/><path d="M12.5,2.5 V14" stroke="#000" stroke-width="1.8" stroke-dasharray="2 1.3"/><path d="M2,6.5 Q4.5,0 7,4.5 T12.5,12.5 Q14.5,12 15.5,7" stroke="#118811" fill="none" stroke-width="1.2"/></g></g><g transform="translate(154,64)"><g transform="translate(0,-0.8)"><path d="M0.5,1 V15 M0.5,2.5 H15 M0.5,13.5 H15" stroke="#7a7a7a" stroke-width="1.1"/><rect x="1" y="3" width="14" height="10" fill="#fff"/><path d="M7.8,2.5 V14" stroke="#000" stroke-width="1.8" stroke-dasharray="2 1.3"/><path d="M1,13 L15,3" stroke="#118811" stroke-width="1.1"/><rect x="1" y="11.5" width="3" height="2" fill="#118811"/><rect x="12" y="2.5" width="3" height="2" fill="#118811"/></g></g><g transform="translate(176,64)"><g transform="translate(0,-0.8)"><path d="M0.5,1 V15 M0.5,2.5 H15 M0.5,13.5 H15" stroke="#7a7a7a" stroke-width="1.1"/><rect x="1" y="3" width="14" height="10" fill="#fff"/><path d="M7.8,2.5 V14" stroke="#000" stroke-width="1.8" stroke-dasharray="2 1.3"/><path d="M1,9 Q5,3 8,9 T15,12 M1,5 Q6,12 9,9 T15,6" stroke="#118811" fill="none" stroke-width="1.1"/></g></g><g transform="translate(199,64)"><g transform="translate(0,-0.8)"><path d="M0.5,1 V15 M0.5,2.5 H15 M0.5,13.5 H15" stroke="#7a7a7a" stroke-width="1.1"/><rect x="1" y="3" width="14" height="10" fill="#fff"/><path d="M7.8,2.5 V14" stroke="#000" stroke-width="1.8" stroke-dasharray="2 1.3"/><path d="M1,8 Q5,14 9,9 T15,5 M3,3 Q7,12 11,10 T15,10" stroke="#118811" fill="none" stroke-width="1.1"/></g></g><g transform="translate(222,64)"><g transform="translate(0,-0.8)"><path d="M0.5,1 V15 M0.5,2.5 H15 M0.5,13.5 H15" stroke="#7a7a7a" stroke-width="1.1"/><rect x="1" y="3" width="14" height="10" fill="#fff"/><path d="M7.8,2.5 V14" stroke="#000" stroke-width="1.8" stroke-dasharray="2 1.3"/><path d="M1,3 L8.5,7 L15,3 M1,6 L8.5,10 L15,6 M1,9 L8.5,13 L15,9" stroke="#118811" fill="none" stroke-width="1.1"/><rect x="7" y="11.5" width="3" height="2" fill="#000"/></g></g><g transform="translate(245,64)"><g transform="translate(0,-0.8)"><path d="M0.5,1 V15 M0.5,2.5 H15 M0.5,13.5 H15" stroke="#7a7a7a" stroke-width="1.1"/><rect x="1" y="3" width="14" height="10" fill="#fff"/><path d="M7.8,2.5 V14" stroke="#000" stroke-width="1.8" stroke-dasharray="2 1.3"/><path d="M1,13 L8.5,9 L15,13 M1,10 L8.5,6 L15,10 M1,7 L8.5,3 L15,7" stroke="#118811" fill="none" stroke-width="1.1"/><rect x="7" y="2.5" width="3" height="2" fill="#000"/></g></g><g transform="translate(273,64)"><rect x="0.5" y="2.5" width="11" height="11" rx="1" fill="url(#gyel)" stroke="#9a7a20" stroke-width="0.8"/><rect x="3.5" y="1" width="5" height="3" fill="#e8d8a0" stroke="#8a7020" stroke-width="0.6"/><rect x="5.5" y="7.5" width="10" height="8" fill="#f4f8fc" stroke="#3a5a8a" stroke-width="1"/><path d="M7,9.5 h7 M7,14 h7" stroke="#5a7ab8"/><path d="M7,12 l1,-1 1,1 1,-1 1,1 1,-1 1,1" stroke="#e04020" fill="none" stroke-width="0.9"/></g><g transform="translate(292,64)"><path d="M4,6 h8 l-4,4 z" fill="#000"/></g><g transform="translate(316,64)"><rect x="2.5" y="1.5" width="11" height="13" fill="#f8fafe" stroke="#3a5a8a" stroke-width="1"/><rect x="3" y="2" width="10" height="2" fill="#6a9ae0"/><path d="M4.5,6.5 h7 M4.5,8.5 h7 M4.5,10.5 h6 M4.5,12.5 h7" stroke="#5a6a8a" stroke-width="1"/></g><g transform="translate(344,64)"><rect x="0.5" y="2.5" width="11" height="10" rx="1" fill="url(#gyel)" stroke="#9a7a20" stroke-width="0.8"/><rect x="3.5" y="1" width="5" height="3" fill="#e8d8a0" stroke="#8a7020" stroke-width="0.6"/><rect x="3.5" y="6.5" width="12" height="9" fill="#f0f4fa" stroke="#3a5a8a" stroke-width="1"/><text x="9.5" y="14" text-anchor="middle" font-family="Liberation Sans" font-size="7.5" font-weight="bold" fill="#222" letter-spacing="-0.4">123</text></g><g transform="translate(373,64)"><path d="M1,1.5 H15 M1,14.5 H15" stroke="#000" stroke-width="1.2"/><path d="M0,1.5 L2.5,0 V3 Z M16,1.5 L13.5,0 V3 Z M0,14.5 L2.5,13 V16 Z M16,14.5 L13.5,13 V16 Z M0,8 L2.5,6.5 V9.5 Z M16,8 L13.5,6.5 V9.5 Z" fill="#000"/><rect x="3.5" y="4.5" width="9" height="8" fill="#e4ecf8" stroke="#4a6a9a" stroke-width="1"/><path d="M4.5,11 L6.5,9 L8,10 L11.5,6.5" stroke="#e03030" fill="none" stroke-width="0.9"/></g><g transform="translate(396,64)"><path d="M1.5,1 V15 M14.5,1 V15 M8,1 V3 M8,13 V15" stroke="#000" stroke-width="1.2"/><path d="M1.5,0 L0,2.5 H3 Z M1.5,16 L0,13.5 H3 Z M14.5,0 L13,2.5 H16 Z M14.5,16 L13,13.5 H16 Z M8,0 L6.5,2.5 H9.5 Z M8,16 L6.5,13.5 H9.5 Z" fill="#000"/><rect x="3.5" y="4.5" width="9" height="8" fill="#e4ecf8" stroke="#4a6a9a" stroke-width="1"/><path d="M4.5,11 L6.5,9 L8,10 L11.5,6.5" stroke="#e03030" fill="none" stroke-width="0.9"/></g><g transform="translate(422,64)"><circle cx="6.5" cy="6.5" r="5.5" fill="url(#gsph)" stroke="#7a7a7a" stroke-width="1"/><path d="M10.5,10.5 L14,14" stroke="#e0b020" stroke-width="2.8" stroke-linecap="round"/><path d="M10.5,10.5 L14,14" stroke="#8a6a10" stroke-width="0.6"/><path d="M3.5,6.5 h6 M6.5,3.5 v6" stroke="#3a5a9a" stroke-width="2"/></g><g transform="translate(445,64)"><circle cx="6.5" cy="6.5" r="5.5" fill="url(#gsph)" stroke="#7a7a7a" stroke-width="1"/><path d="M10.5,10.5 L14,14" stroke="#e0b020" stroke-width="2.8" stroke-linecap="round"/><path d="M10.5,10.5 L14,14" stroke="#8a6a10" stroke-width="0.6"/><path d="M3.5,6.5 h6" stroke="#3a5a9a" stroke-width="2"/></g><g transform="translate(466,64)"><rect x="5.5" y="0.5" width="10" height="7" fill="#fff" stroke="#3a5a8a" stroke-width="1"/><text x="10.5" y="6.5" text-anchor="middle" font-family="Liberation Sans" font-weight="bold" font-size="6" fill="#222">100</text><circle cx="5" cy="10" r="3.5" fill="url(#gsphg)" stroke="#8a8a8a" stroke-width="0.8"/><path d="M7.5,12.5 L10,15" stroke="#f09020" stroke-width="2.2" stroke-linecap="round"/></g><g transform="translate(497,64)"><rect x="1" y="1.5" width="15" height="12" fill="#fff" rx="1"/><rect x="2" y="2.5" width="4" height="4" fill="#a8a8a8"/><rect x="7" y="2.5" width="4" height="4" fill="#a0a0a0"/><rect x="12" y="2.5" width="3.5" height="4" fill="#989898"/><rect x="2" y="8" width="4" height="4.5" fill="#909090"/><rect x="7" y="8" width="4" height="4.5" fill="#8a8a8a"/><rect x="12" y="8" width="3.5" height="4.5" fill="#e0e0e0"/></g><g transform="translate(516,64)"><path d="M4,6 h8 l-4,4 z" fill="#9a9a9a"/></g><g transform="translate(536,64)"><path d="M1.5,13.5 L7,1.5 h2 L14.5,13.5 h-4 l-1,-2.5 h-3 l-1,2.5 z M7,8.5 h2.5 l-1.2,-3 z" fill="#2a4aa0"/><path d="M0.5,13.5 h5 M10,13.5 h5.5" stroke="#2a4aa0" stroke-width="1"/></g><g transform="translate(558,64)"><path d="M0.5,11 L5,1 h2 L11,11 h-3 l-0.8,-2 h-2.6 l-0.8,2 z M5,7 h2 l-1,-2.5 z" fill="#2a6ad0"/><rect x="10.5" y="0.5" width="4" height="4" fill="#fff" stroke="#3a70c8" stroke-width="1"/><path d="M5,15 L12,6 L14,7.5 L7,16 Z" fill="#f0e040" stroke="#c0a020" stroke-width="0.5"/><path d="M2,15.5 L6,13 L7.5,15 Z" fill="#3a70c8"/></g><g transform="translate(578,64)"><path d="M4,6 h8 l-4,4 z" fill="#000"/></g><g transform="translate(601,64)"><path d="M1.5,5.5 H6 L7,6.5 H14.5 V14.5 H1.5 Z" fill="url(#ggray)" stroke="#8a8a8a" stroke-width="1"/><path d="M1,4 H6 V1.5 L10,5 L6,8.5 V6 H1 Z" fill="#c8c8c8" stroke="#9a9a9a" stroke-width="0.7"/></g><g transform="translate(628,64)"><rect x="0.5" y="0.5" width="6" height="6" fill="url(#ggray)" stroke="#9a9a9a"/><rect x="3.5" y="3.5" width="8" height="8" fill="url(#ggray)" stroke="#9a9a9a"/><rect x="8.5" y="8.5" width="6" height="6" fill="url(#ggray)" stroke="#9a9a9a"/></g><g transform="translate(652,64)"><rect x="0.5" y="0.5" width="6" height="6" fill="url(#ggray)" stroke="#9a9a9a"/><rect x="3.5" y="3.5" width="6" height="6" fill="url(#ggray)" stroke="#9a9a9a"/><rect x="7.5" y="7.5" width="7" height="7" fill="url(#ggray)" stroke="#9a9a9a"/></g><g transform="translate(680,64)"><rect x="1" y="1" width="2" height="14" fill="#555"/><rect x="4.5" y="2.5" width="6" height="3" fill="#fff" stroke="#909090" stroke-width="1"/><rect x="4.5" y="7.5" width="10" height="3" fill="#fff" stroke="#909090" stroke-width="1"/><path d="M4,13.5 H12" stroke="#555" stroke-width="1.2"/><path d="M3.5,13.5 L6,12 V15 Z" fill="#555"/></g><g transform="translate(704,64)"><rect x="7" y="0" width="2" height="2" fill="#555"/><rect x="7" y="14" width="2" height="2" fill="#555"/><rect x="2.5" y="3.5" width="11" height="3" fill="#fff" stroke="#909090"/><rect x="4.5" y="9.5" width="7" height="3" fill="#fff" stroke="#909090"/><path d="M1,8 H15" stroke="#909090"/></g><g transform="translate(726,64)"><rect x="13" y="1" width="2" height="14" fill="#555"/><rect x="5.5" y="2.5" width="6" height="3" fill="#fff" stroke="#909090"/><rect x="1.5" y="7.5" width="10" height="3" fill="#fff" stroke="#909090"/><path d="M4,13.5 H12" stroke="#555" stroke-width="1.2"/><path d="M12.5,13.5 L10,12 V15 Z" fill="#555"/></g><g transform="translate(749,64)"><rect x="1" y="1" width="14" height="2" fill="#555"/><rect x="2.5" y="4.5" width="3" height="7" fill="#fff" stroke="#909090"/><rect x="7.5" y="4.5" width="3" height="11" fill="#fff" stroke="#909090"/><path d="M13,15 V5" stroke="#555" stroke-width="1.2"/><path d="M13,4 L11.5,6.5 H14.5 Z" fill="#555"/></g><g transform="translate(772,64)"><rect x="0" y="7" width="2" height="2" fill="#555"/><rect x="14" y="7" width="2" height="2" fill="#555"/><rect x="3.5" y="1.5" width="3" height="13" fill="#fff" stroke="#909090"/><rect x="9.5" y="4.5" width="3" height="7" fill="#fff" stroke="#909090"/><path d="M8,2 V14" stroke="#909090"/></g><g transform="translate(795,64)"><rect x="1" y="13" width="14" height="2" fill="#555"/><rect x="2.5" y="5.5" width="3" height="7" fill="#fff" stroke="#909090"/><rect x="6.5" y="1.5" width="3" height="11" fill="#fff" stroke="#909090"/><path d="M13,1 V11" stroke="#555" stroke-width="1.2"/><path d="M13,12 L11.5,9.5 H14.5 Z" fill="#555"/></g><rect x="268" y="63" width="1" height="19" fill="#a8a8a8"/><rect x="269" y="63" width="1" height="19" fill="#ffffff"/><rect x="310" y="63" width="1" height="19" fill="#a8a8a8"/><rect x="311" y="63" width="1" height="19" fill="#ffffff"/><rect x="338" y="63" width="1" height="19" fill="#a8a8a8"/><rect x="339" y="63" width="1" height="19" fill="#ffffff"/><rect x="366" y="63" width="1" height="19" fill="#a8a8a8"/><rect x="367" y="63" width="1" height="19" fill="#ffffff"/><rect x="418" y="63" width="1" height="19" fill="#a8a8a8"/><rect x="419" y="63" width="1" height="19" fill="#ffffff"/><rect x="492" y="63" width="1" height="19" fill="#a8a8a8"/><rect x="493" y="63" width="1" height="19" fill="#ffffff"/><rect x="596" y="63" width="1" height="19" fill="#a8a8a8"/><rect x="597" y="63" width="1" height="19" fill="#ffffff"/><rect x="624" y="63" width="1" height="19" fill="#a8a8a8"/><rect x="625" y="63" width="1" height="19" fill="#ffffff"/><rect x="674" y="63" width="1" height="19" fill="#a8a8a8"/><rect x="675" y="63" width="1" height="19" fill="#ffffff"/><rect x="965" y="33" width="22" height="22" fill="url(#chk2)"/><path d="M965.5,55 V33.5 H987" stroke="#a0a0a0" stroke-width="1" fill="none"/><path d="M966,54.5 H986.5 V34" stroke="#ffffff" stroke-width="1" fill="none"/><rect x="1437" y="33" width="22" height="22" fill="url(#chk2)"/><path d="M1437.5,55 V33.5 H1459" stroke="#a0a0a0" stroke-width="1" fill="none"/><path d="M1438,54.5 H1458.5 V34" stroke="#ffffff" stroke-width="1" fill="none"/><rect x="1460" y="33" width="22" height="22" fill="url(#chk2)"/><path d="M1460.5,55 V33.5 H1482" stroke="#a0a0a0" stroke-width="1" fill="none"/><path d="M1461,54.5 H1481.5 V34" stroke="#ffffff" stroke-width="1" fill="none"/><rect x="1705" y="33" width="22" height="22" fill="url(#chk2)"/><path d="M1705.5,55 V33.5 H1727" stroke="#a0a0a0" stroke-width="1" fill="none"/><path d="M1706,54.5 H1726.5 V34" stroke="#ffffff" stroke-width="1" fill="none"/><rect x="1728" y="33" width="15" height="22" fill="url(#chk2)"/><path d="M1728.5,55 V33.5 H1743" stroke="#a0a0a0" stroke-width="1" fill="none"/><path d="M1729,54.5 H1742.5 V34" stroke="#ffffff" stroke-width="1" fill="none"/><rect x="1812" y="33" width="23" height="22" fill="url(#chk2)"/><path d="M1812.5,55 V33.5 H1835" stroke="#a0a0a0" stroke-width="1" fill="none"/><path d="M1813,54.5 H1834.5 V34" stroke="#ffffff" stroke-width="1" fill="none"/><g transform="translate(969,36)"><path d="M4.5,0.8 V13.2 L7.3,10.6 L9.6,15.2 L11.4,14.3 L9.2,9.7 L12.9,9.6 Z" fill="#fff" stroke="#46638f" stroke-width="1" stroke-linejoin="round"/></g><g transform="translate(992,36)"><path d="M3.6,9.2 V5.6 a1,1 0 0 1 2,0 V8 V3.3 a1,1 0 0 1 2,0 V7.6 V2.6 a1,1 0 0 1 2,0 V7.6 V3.8 a1,1 0 0 1 2,0 V8.2 V6 a1,1 0 0 1 2,0 V10.5 q0,4 -4.5,4.5 h-1.5 q-2.2,0 -3.4,-2 l-1.8,-2.8 a1,1 0 0 1 1.6,-1 z" fill="#f6f6f6" stroke="#5a5a5a" stroke-width="0.9" stroke-linejoin="round"/></g><g transform="translate(1014,36)"><path d="M1,8 L4.5,5 L8,9 L11.5,5 L15,8.5" stroke="#000" fill="none" stroke-width="1.1"/></g><g transform="translate(1037,36)"><path d="M1.2,1.2 H14.2 V5.4 H12.9 Q12.5,3.3 10.6,3.3 H9.3 V12.0 Q9.3,12.7 11.0,12.7 V14.2 H4.4 V12.7 Q6.1,12.7 6.1,12.0 V3.3 H4.8 Q2.9,3.3 2.5,5.4 H1.2 Z" fill="#000"/></g><g transform="translate(1060,36)"><rect x="0" y="5" width="3" height="3" fill="#000"/><path d="M2,6.5 H4.5 V13.5 H15" stroke="#2a4a8a" fill="none" stroke-width="1"/><path d="M6,12 L13,3 L15,4.5 L8,13.5 L5.5,14 Z" fill="#f0d040" stroke="#a08020" stroke-width="0.6"/><path d="M13,3 L14,1.5 L16,3 L15,4.5 Z" fill="#e07060"/></g><g transform="translate(1083,36)"><rect x="0" y="4" width="3" height="3" fill="#000"/><path d="M2,6 L11,15" stroke="#2a4a8a" stroke-width="1"/><path d="M6,11 L13,2 L15,3.5 L8,12.5 L5.5,13 Z" fill="#f0d040" stroke="#a08020" stroke-width="0.6"/><path d="M13,2 L14,0.5 L16,2 L15,3.5 Z" fill="#e07060"/></g><g transform="translate(1106,36)"><rect x="1" y="1" width="15" height="13" rx="1.5" fill="#f0c818" stroke="#7a6a10" stroke-width="0.8"/><rect x="2.5" y="3" width="12" height="7" fill="#8ab8e8" stroke="#3a5a3a" stroke-width="0.6"/><path d="M6,9 L8.5,4.5 L11,9" stroke="#fff" fill="none" stroke-width="0.7"/><rect x="2" y="11" width="13" height="2" fill="#222"/><rect x="2" y="14" width="3" height="2" fill="#111"/><rect x="12" y="14" width="3" height="2" fill="#111"/></g><g transform="translate(1128,36)"><circle cx="11" cy="5.6" r="4.6" fill="#dbe7f8" stroke="#5a8ad0" stroke-width="1"/><rect x="1.5" y="3.5" width="8.5" height="8.5" fill="#c8dbf5" stroke="#4a7ac0" stroke-width="1"/><path d="M5.5,7.5 v6 a3.5,1.5 0 0 0 7,0 v-6" fill="#e4eefc" stroke="#4a7ac0" stroke-width="1"/><ellipse cx="9" cy="7.5" rx="3.5" ry="1.5" fill="#f8fbff" stroke="#4a7ac0" stroke-width="1"/></g><g transform="translate(1148,36)"><path d="M4,6 h8 l-4,4 z" fill="#000"/></g><g transform="translate(1168,36)"><ellipse cx="4.5" cy="1.8" rx="3" ry="1.6" fill="#e4eefc" stroke="#3a6ab0" stroke-width="0.9"/><path d="M4.5,3.5 V5 M4.5,10 V12 M7,7.5 H10" stroke="#3a6ab0" stroke-width="0.9"/><path d="M4.5,5 L7,7.5 L4.5,10 L2,7.5 Z" fill="#e4eefc" stroke="#3a6ab0" stroke-width="0.9"/><rect x="9.5" y="5.5" width="6" height="4" fill="#e4eefc" stroke="#3a6ab0" stroke-width="0.9"/><ellipse cx="4.5" cy="13.5" rx="3" ry="1.6" fill="#e4eefc" stroke="#3a6ab0" stroke-width="0.9"/></g><g transform="translate(1186,36)"><path d="M4,6 h8 l-4,4 z" fill="#000"/></g><g transform="translate(1205,36)"><rect x="0.5" y="1.5" width="15" height="13" rx="1" fill="#fff" stroke="#a0a0a0" stroke-width="1"/><rect x="2" y="3" width="12" height="10" fill="url(#gsky)"/><path d="M2,6.5 Q5,6.5 8,9.5 T14,11 V13 H2 Z" fill="#2e7e50"/><rect x="2" y="11" width="12" height="2" fill="#2a8ae0"/></g><g transform="translate(1228,36)"><rect x="1" y="1" width="15" height="15" fill="#000"/><rect x="1" y="1" width="15" height="1.5" fill="#8ab0e0"/><path d="M2,4.5 h6 M9,4.5 h6 M2,6.5 h6 M9,6.5 h6 M2,8.5 h6 M9,8.5 h6 M2,10.5 h6 M9,10.5 h6 M2,12.5 h6 M9,12.5 h6 M2,14.5 h6 M9,14.5 h6" stroke="#fff" stroke-width="1"/></g><g transform="translate(1251,36)"><path d="M1,15 L12,3" stroke="#3a6ab8" stroke-width="1.2"/><path d="M7,8 L11,3 L16,5.5 L13,10 Q11,12 9,10.5 Z" fill="#7a9ee8" stroke="#3a6ab8" stroke-width="0.8"/></g><g transform="translate(1274,36)"><circle cx="8" cy="8" r="7.6" fill="#4a78d0" stroke="#3a60b0" stroke-width="0.6"/><circle cx="8" cy="4.2" r="1.3" fill="#fff"/><path d="M6.2,6.8 H9 V11.8 H10.2 V13 H6 V11.8 H7 V8 H6.2 Z" fill="#fff"/></g><g transform="translate(1297,36)"><rect x="0.5" y="1.5" width="15" height="13" fill="#f0f4fc" stroke="#3a5a90" stroke-width="1"/><rect x="1" y="2" width="14" height="2" fill="#5a8ae0"/><circle cx="8" cy="9.5" r="4.2" fill="#2a5ac0"/><text x="8" y="12.3" text-anchor="middle" font-family="Liberation Sans" font-weight="bold" font-size="7.5" fill="#fff">?</text></g><g transform="translate(1320,36)"><rect x="0.5" y="0.5" width="6" height="8" fill="#fff" stroke="#8a9aba" stroke-width="0.8"/><path d="M2,3 h3 M2,5 h3" stroke="#6a8ad0" stroke-width="0.7"/><circle cx="9.5" cy="7" r="5" fill="#3a9a3a"/><path d="M6,6 Q9,4 10,7 T13,9 M8,3 Q11,5 12,3" stroke="#3a6ad0" fill="none" stroke-width="1.4"/><path d="M4.5,14 a2,1.5 0 1 1 4,0 a2,1.5 0 1 1 -4,0 M9.5,14 a2,1.5 0 1 1 4,0 a2,1.5 0 1 1 -4,0" stroke="#4a5a7a" fill="none" stroke-width="1"/></g><g transform="translate(1343,36)"><rect x="1" y="2" width="11" height="11" fill="#fff"/><path d="M1.5,13 V2.5 H12" stroke="#6a6a6a" stroke-width="1.5" fill="none"/><path d="M3.5,7.5 L6,10.5 L11,4" stroke="#000" stroke-width="2" fill="none"/></g><g transform="translate(1366,36)"><rect x="0.5" y="0.5" width="15" height="14" fill="url(#gdoc)" stroke="#3a4a6a" stroke-width="1"/><path d="M3,5 h6 M3,9.5 h6" stroke="#2a3a5a" stroke-width="1.4"/><path d="M9,4 L11,6 L14.5,1.5" stroke="#20a020" stroke-width="1.4" fill="none"/><circle cx="11.5" cy="11" r="3" fill="#f04020"/><path d="M10,12.3 L13,9.7" stroke="#fff" stroke-width="1"/></g><g transform="translate(1388,36)"><rect x="1.5" y="1.5" width="13" height="12" fill="url(#gdoc)" stroke="#d07818" stroke-width="1.2"/><path d="M1.5,5.5 H14.5 M1.5,9.5 H14.5" stroke="#d07818" stroke-width="1.2"/></g><g transform="translate(1412,36)"><path d="M1.5,0.5 H9 L12.5,4 V14.5 H1.5 Z" fill="url(#gdoc)" stroke="#3a4a6a" stroke-width="1"/><path d="M3,2 h1 M5,2 h1 M4,4 h1 M3,6 h1" stroke="#6a8ad0" stroke-width="1"/><path d="M5,6 V11" stroke="#3a70d0" stroke-width="1.2"/><path d="M5,12 L3,9.5 H7 Z" fill="#3a70d0"/><path d="M7,13 L14,5 L16,6.5 L9,14.5 L6.5,15 Z" fill="#f0d040" stroke="#a08020" stroke-width="0.6"/><path d="M14,5 L15,3.5 L16.5,5 L16,6.5 Z" fill="#e07060"/></g><g transform="translate(1441,36)"><path d="M1.5,3.2 Q1.5,0.8 4.8,0.8 Q7,0.8 7.3,2.3 h1.4 Q9,0.8 11.2,0.8 Q14.5,0.8 14.5,3.2 Q14.5,5.6 11.2,5.6 Q9,5.6 8.6,3.8 h-1.2 Q7,5.6 4.8,5.6 Q1.5,5.6 1.5,3.2 Z" fill="#2a2a2a"/><ellipse cx="4.9" cy="3.3" rx="2.1" ry="1.3" fill="#b0d8fc"/><ellipse cx="11.1" cy="3.3" rx="2.1" ry="1.3" fill="#b0d8fc"/><path d="M14,2 L15.8,0" stroke="#2a2a2a" stroke-width="1.2"/><text x="8" y="15" text-anchor="middle" font-family="Liberation Serif" font-weight="bold" font-size="10" fill="#2a3a9a">A</text></g><g transform="translate(1464,36)"><path d="M1.5,3.2 Q1.5,0.8 4.8,0.8 Q7,0.8 7.3,2.3 h1.4 Q9,0.8 11.2,0.8 Q14.5,0.8 14.5,3.2 Q14.5,5.6 11.2,5.6 Q9,5.6 8.6,3.8 h-1.2 Q7,5.6 4.8,5.6 Q1.5,5.6 1.5,3.2 Z" fill="#2a2a2a"/><ellipse cx="4.9" cy="3.3" rx="2.1" ry="1.3" fill="#b0d8fc"/><ellipse cx="11.1" cy="3.3" rx="2.1" ry="1.3" fill="#b0d8fc"/><path d="M14,2 L15.8,0" stroke="#2a2a2a" stroke-width="1.2"/><text x="4" y="15" text-anchor="middle" font-family="Liberation Serif" font-weight="bold" font-size="10" fill="#2a3a9a">A</text><path d="M7.5,12.5 L9,10.5 L10.5,12.5 L12,10.5 L13.5,12.5 L15,10.5 L16,11.5" stroke="#2a3a9a" fill="none" stroke-width="0.9"/></g><g transform="translate(1486,36)"><path d="M1.5,2.7 Q1.5,0.3 4.8,0.3 Q7,0.3 7.3,1.8 h1.4 Q9,0.3 11.2,0.3 Q14.5,0.3 14.5,2.7 Q14.5,5.1 11.2,5.1 Q9,5.1 8.6,3.3 h-1.2 Q7,5.1 4.8,5.1 Q1.5,5.1 1.5,2.7 Z" fill="#2a2a2a"/><ellipse cx="4.9" cy="2.8" rx="2.1" ry="1.3" fill="#b0d8fc"/><ellipse cx="11.1" cy="2.8" rx="2.1" ry="1.3" fill="#b0d8fc"/><path d="M14,1.5 L15.8,-0.5" stroke="#2a2a2a" stroke-width="1.2"/><rect x="0.5" y="7.5" width="8" height="8" fill="#fff" stroke="#2a4a7a" stroke-width="1"/><text x="4.5" y="14" text-anchor="middle" font-family="Liberation Sans" font-weight="bold" font-size="7" fill="#000">N</text><path d="M9,11.5 H14" stroke="#2a4a8a"/><circle cx="10.5" cy="11.5" r="1.4" fill="#e01010"/></g><g transform="translate(1510,36)"><rect x="0.5" y="0.5" width="7" height="5" fill="#fafafa" stroke="#c8c8c8"/><rect x="2.5" y="3.5" width="5" height="5" fill="#f0f0f0" stroke="#c8c8c8"/><path d="M7,2 L12,7 L10,8 L12,11" stroke="#b0b0b0" fill="#f4f4f4"/><rect x="7.5" y="10.5" width="8" height="5" fill="#f0f0f0" stroke="#b8b8b8"/></g><g transform="translate(1528,36)"><path d="M4,6 h8 l-4,4 z" fill="#9a9a9a"/></g><g transform="translate(1547,36)"><path d="M1.5,2.7 Q1.5,0.3 4.8,0.3 Q7,0.3 7.3,1.8 h1.4 Q9,0.3 11.2,0.3 Q14.5,0.3 14.5,2.7 Q14.5,5.1 11.2,5.1 Q9,5.1 8.6,3.3 h-1.2 Q7,5.1 4.8,5.1 Q1.5,5.1 1.5,2.7 Z" fill="#2a2a2a"/><ellipse cx="4.9" cy="2.8" rx="2.1" ry="1.3" fill="#b0d8fc"/><ellipse cx="11.1" cy="2.8" rx="2.1" ry="1.3" fill="#b0d8fc"/><path d="M14,1.5 L15.8,-0.5" stroke="#2a2a2a" stroke-width="1.2"/><rect x="0.5" y="7.5" width="8" height="8" rx="1" fill="#fff" stroke="#a01818" stroke-width="1"/><text x="4.5" y="14" text-anchor="middle" font-family="Liberation Sans" font-size="7" fill="#000">V</text><path d="M9,11.5 H14" stroke="#2a4a8a"/><circle cx="10.5" cy="11.5" r="1.4" fill="#e01010"/></g><g transform="translate(1570,36)"><path d="M1,4.5 H13" stroke="#4a6aa8" stroke-width="1.4"/><path d="M15,4.5 L11,2 V7 Z" fill="#4a6aa8"/><path d="M1,13 H15" stroke="#000" stroke-width="1.4"/><path d="M6.5,10 L10,13 L6.5,16 Z" fill="#000"/><path d="M10,10 V16" stroke="#000" stroke-width="1.4"/></g><g transform="translate(1593,36)"><path d="M7,0.5 H12 L9.5,4.5 H12 L6.5,11 L8,6 H6 Z" fill="url(#gyel)" stroke="#c09020" stroke-width="0.5"/><path d="M1,13 H15" stroke="#000" stroke-width="1.4"/><path d="M6.5,10 L10,13 L6.5,16 Z" fill="#000"/><path d="M10,10 V16" stroke="#000" stroke-width="1.4"/></g><g transform="translate(1616,36)"><path d="M3,6 L6,9 L13,1" stroke="#30a030" stroke-width="2.2" fill="none"/><path d="M1,13 H15" stroke="#000" stroke-width="1.4"/><path d="M6.5,10 L10,13 L6.5,16 Z" fill="#000"/><path d="M10,10 V16" stroke="#000" stroke-width="1.4"/></g><g transform="translate(1639,36)"><path d="M1.5,3.2 Q1.5,0.8 4.8,0.8 Q7,0.8 7.3,2.3 h1.4 Q9,0.8 11.2,0.8 Q14.5,0.8 14.5,3.2 Q14.5,5.6 11.2,5.6 Q9,5.6 8.6,3.8 h-1.2 Q7,5.6 4.8,5.6 Q1.5,5.6 1.5,3.2 Z" fill="#2a2a2a"/><ellipse cx="4.9" cy="3.3" rx="2.1" ry="1.3" fill="#b0d8fc"/><ellipse cx="11.1" cy="3.3" rx="2.1" ry="1.3" fill="#b0d8fc"/><path d="M14,2 L15.8,0" stroke="#2a2a2a" stroke-width="1.2"/><path d="M2,12 H14" stroke="#2a4a8a" stroke-width="1"/><path d="M0.5,12 L2,10.5 L3.5,12 L2,13.5 Z M12.5,12 L14,10.5 L15.5,12 L14,13.5 Z" fill="#e01010"/></g><g transform="translate(1662,36)"><path d="M8,0.8 L15.2,14.5 H0.8 Z" fill="#ffff00" stroke="#000" stroke-width="1"/></g><g transform="translate(1686,36)"><path d="M8,1 V15 M1,8 H15" stroke="#2a4a6a" stroke-width="1.2"/><path d="M8,0 L6,2.5 H10 Z M8,16 L6,13.5 H10 Z M0,8 L2.5,6 V10 Z M16,8 L13.5,6 V10 Z" fill="#2a4a6a"/></g><g transform="translate(1708,36)"><path d="M3.5,2 V15 M6.5,2 V15 M9.5,2 V15 M12.5,2 V15 M2,3.5 H15 M2,6.5 H15 M2,9.5 H15 M2,12.5 H15" stroke="#3a6ac8" stroke-width="1.1"/></g><g transform="translate(1728,36)"><path d="M4,6 h8 l-4,4 z" fill="#000"/></g><g transform="translate(1746,36)"><path d="M1.5,1.5 H11 L14.5,5 V15.5 H1.5 Z" fill="url(#gdoc)" stroke="#34455f" stroke-width="1"/><rect x="3.5" y="3.5" width="9" height="10" fill="none" stroke="#d07818" stroke-width="1.2"/><path d="M3.5,7 H12.5 M3.5,10 H12.5 M8,3.5 V13.5" stroke="#d07818" stroke-width="1.2"/></g><g transform="translate(1768,36)"><path d="M1.5,1.5 H11 L14.5,5 V15.5 H1.5 Z" fill="url(#gdoc)" stroke="#34455f" stroke-width="1"/><path d="M3.5,13.5 V3.5 H11" stroke="#d07818" stroke-width="1.3" fill="none"/></g><g transform="translate(1792,36)"><path d="M1.5,1.5 H11 L14.5,5 V15.5 H1.5 Z" fill="url(#gdoc)" stroke="#34455f" stroke-width="1"/><rect x="6.5" y="9.5" width="6" height="5" fill="none" stroke="#d07818" stroke-width="1.2"/><path d="M6.5,12 H12.5" stroke="#d07818" stroke-width="1.2"/></g><g transform="translate(1816,36)"><rect x="9.5" y="1.5" width="5" height="5" fill="#c8daf4" stroke="#6a9ae0"/><rect x="1.5" y="9.5" width="5" height="5" fill="#c8daf4" stroke="#6a9ae0"/><path d="M4,9.5 V4 H9.5" stroke="#2a6ae0" stroke-width="1.8" fill="none"/><path d="M7.5,12 h1 M10,10 l2,-2 2,2 -2,2 z" stroke="#6a9ae0" stroke-width="0.8" fill="none" stroke-dasharray="1 1"/></g><g transform="translate(1843,36)"><rect x="1.5" y="6.5" width="11" height="8" fill="#f2f6fc" stroke="#3a4a64" stroke-width="1"/><rect x="2" y="7" width="10" height="2" fill="#8fb0e8"/><path d="M3,10.5 h2 M6,10.5 h5 M3,12.5 h2 M6,12.5 h5" stroke="#6080c0" stroke-width="1"/><path d="M4.5,5 L8.5,1.5 h4.5 q1.5,0.5 1,2.5 q-0.2,2 -2,2 h-3 L7,8.5 Z" fill="url(#gyel)" stroke="#a07818" stroke-width="0.6"/><path d="M5,5 L9,8 M6,3.8 L10,7" stroke="#8a6a18" stroke-width="0.5"/><rect x="14" y="1" width="1.8" height="6" fill="#3aa040"/></g><rect x="1434" y="35" width="1" height="19" fill="#a8a8a8"/><rect x="1435" y="35" width="1" height="19" fill="#ffffff"/><rect x="1838" y="35" width="1" height="19" fill="#a8a8a8"/><rect x="1839" y="35" width="1" height="19" fill="#ffffff"/><rect x="1866" y="35" width="1" height="19" fill="#a8a8a8"/><rect x="1867" y="35" width="1" height="19" fill="#ffffff"/><g transform="translate(968,64)"><path d="M2.5,2.5 H10 V10 M5.5,5.5 H13.5 V13.5 H5.5 Z M2.5,2.5 V9.5 H5.5" stroke="#555" fill="none" stroke-width="1"/><rect x="1" y="1" width="3" height="3" fill="#555"/><rect x="8.5" y="1" width="3" height="3" fill="#555"/><rect x="1" y="8.5" width="3" height="3" fill="#555"/><rect x="4" y="4" width="3" height="3" fill="#555"/><rect x="12" y="4" width="3" height="3" fill="#555"/><rect x="4" y="12" width="3" height="3" fill="#555"/><rect x="12" y="12" width="3" height="3" fill="#555"/></g><g transform="translate(992,64)"><rect x="2.5" y="0.5" width="11" height="12" rx="2" fill="url(#ggray)" fill-opacity="0.25" stroke="#c0c0c0"/><path d="M2.5,15 Q3,13.5 5,13.5 H11 Q13,13.5 13.5,15" stroke="#c0c0c0" fill="none"/></g><g transform="translate(1014,64)"><path d="M4,4 A5.5,5.5 0 1 0 8,2.5" stroke="#a8a8a8" stroke-width="2" fill="none"/><path d="M8,0 L11,2.5 L8,5 Z" fill="#a8a8a8"/><circle cx="8" cy="8" r="2.2" fill="#909090"/><path d="M0.5,7 h1.5 M1,9 h1.5" stroke="#b0b0b0"/></g><g transform="translate(1037,64)"><path d="M7,2 V13 H1 Z" fill="url(#ggray)" stroke="#c0c0c0" stroke-width="0.6"/><path d="M9,2 V13 H15 Z" fill="#a8a8a8"/></g><g transform="translate(1060,64)"><path d="M15,1 V7 H1 Z" fill="url(#ggray)" stroke="#c0c0c0" stroke-width="0.6"/><path d="M15,9 V15 L1,9 Z" fill="#a8a8a8"/></g><g transform="translate(1088,64)"><g transform="translate(0,-1) scale(1,0.9)"><path d="M2,6 Q2,2 4,1.5 H6 V6 Z M10,1.5 H12 Q14,2 14,6 H10 Z" fill="#2a4a9a"/><rect x="1" y="6" width="6" height="7" rx="1" fill="#3a5aaa"/><rect x="9" y="6" width="6" height="7" rx="1" fill="#3a5aaa"/><rect x="6" y="4" width="4" height="5" fill="#1a2a6a"/><rect x="2" y="9" width="3" height="3" fill="#c8d8f4"/><rect x="11" y="9" width="3" height="3" fill="#c8d8f4"/></g><path d="M2,14 H4 L5.5,12.5 L7,14.5 L8.5,12.5 L10,14.5 L11.5,12.5 L13,14 H15" stroke="#1a2aa0" fill="none" stroke-width="0.9"/></g><g transform="translate(1112,64)"><g transform="translate(0,1)"><path d="M2,6 Q2,2 4,1.5 H6 V6 Z M10,1.5 H12 Q14,2 14,6 H10 Z" fill="#2a4a9a"/><rect x="1" y="6" width="6" height="7" rx="1" fill="#3a5aaa"/><rect x="9" y="6" width="6" height="7" rx="1" fill="#3a5aaa"/><rect x="6" y="4" width="4" height="5" fill="#1a2a6a"/><rect x="2" y="9" width="3" height="3" fill="#c8d8f4"/><rect x="11" y="9" width="3" height="3" fill="#c8d8f4"/></g></g><g transform="translate(1139,64)"><path d="M4.5,1.5 H14.5 V14.5 H4.5 Z" fill="#f8f8f8" stroke="#b0b0b0"/><path d="M7,4.5 h1 M9,4.5 h4 M7,7 h1 M9,7 h4 M7,9.5 h1 M9,9.5 h4 M9,12 h4" stroke="#a0a0a0"/><path d="M1,11 Q1,6 6,6 V4 L9,7.5 L6,11 V9 Q3,9 1,11 Z" fill="#b8b8b8" stroke="#a0a0a0" stroke-width="0.5"/></g><g transform="translate(1167,64)"><rect x="0.5" y="0.5" width="10" height="9" fill="#f4f4f4" stroke="#b8b8b8"/><path d="M2,3 h2 M5,3 h3 M2,6 h6" stroke="#c0c0c0"/><rect x="6.5" y="6.5" width="9" height="8" fill="#f4f4f4" stroke="#b0b0b0"/><path d="M8,10 h6 M8,12.5 h6" stroke="#b0b0b0"/><path d="M2,12 h3 v-2 l2.5,3 -2.5,3 v-2 h-3 z" fill="#b8b8b8"/></g><g transform="translate(1194,64)"><rect x="0.5" y="0.5" width="11" height="10" fill="#f4f8fc" stroke="#3a5a90"/><rect x="1" y="1" width="10" height="2" fill="#6a9ae0"/><path d="M2,5 h3 M6,5 h4 M2,7.5 h3 M6,7.5 h4" stroke="#8aa0c0"/><path d="M9.5,8.5 L11,7 L14.5,11 V15.5 H7.5 V10.5 Z" fill="#f4f8fc" stroke="#3a5a90"/><rect x="9" y="11.5" width="4" height="2" fill="none" stroke="#3a5a90" stroke-width="0.8"/><path d="M1,15 L8,7 L10,8.5 L3,16 Z" fill="#f0d040" stroke="#a08020" stroke-width="0.5"/><path d="M8,7 L9,5.5 L11,7 L10,8.5 Z" fill="#e07060"/></g><g transform="translate(1224,64)"><path d="M4.5,1 H11.5 L15,4.5 V11.5 L11.5,15 H4.5 L1,11.5 V4.5 Z" fill="#c4c4c4"/><path d="M8,3 V9" stroke="#fff" stroke-width="2.2"/><circle cx="8" cy="12" r="1.2" fill="#fff"/></g><g transform="translate(1246,64)"><circle cx="8" cy="8" r="7.5" fill="#6e6e6e"/><path d="M5,5 L11,11 M11,5 L5,11" stroke="#fff" stroke-width="2"/></g><g transform="translate(1270,64)"><path d="M4.5,1 H11.5 L15,4.5 V11.5 L11.5,15 H4.5 L1,11.5 V4.5 Z" fill="#d8d8d8"/><path d="M3.5,8 h2 M7,8 h2 M10.5,8 h2" stroke="#6a6a6a" stroke-width="2"/></g><g transform="translate(1296,64)"><rect x="0.5" y="0.5" width="6" height="6" fill="url(#ggray)" stroke="#9a9a9a"/><rect x="3.5" y="3.5" width="8" height="8" fill="url(#ggray)" stroke="#9a9a9a"/><rect x="8.5" y="8.5" width="6" height="6" fill="url(#ggray)" stroke="#9a9a9a"/></g><g transform="translate(1320,64)"><rect x="0.5" y="0.5" width="6" height="6" fill="url(#ggray)" stroke="#9a9a9a"/><rect x="3.5" y="3.5" width="6" height="6" fill="url(#ggray)" stroke="#9a9a9a"/><rect x="7.5" y="7.5" width="7" height="7" fill="url(#ggray)" stroke="#9a9a9a"/></g><g transform="translate(1348,64)"><path d="M1.5,5.5 H6 L7,6.5 H14.5 V14.5 H1.5 Z" fill="url(#ggray)" stroke="#8a8a8a" stroke-width="1"/><path d="M1,4 H6 V1.5 L10,5 L6,8.5 V6 H1 Z" fill="#c8c8c8" stroke="#9a9a9a" stroke-width="0.7"/></g><g transform="translate(1377,64)"><path d="M1.5,0.5 H9 L12.5,4 V15.5 H1.5 Z" fill="url(#gdoc)" stroke="#3a4a6a"/><path d="M9.5,7 h3 v3 h3 v3 h-3 v3 h-3 v-3 h-3 v-3 h3 z" fill="#f4d830" stroke="#9a8010" stroke-width="0.7"/></g><g transform="translate(1400,64)"><path d="M1.5,0.5 H9 L12.5,4 V15.5 H1.5 Z" fill="url(#gdoc)" stroke="#3a4a6a"/><path d="M7,6.5 L15,15 M15,6.5 L7,15" stroke="#f04020" stroke-width="1.8"/></g><g transform="translate(1426,64)"><circle cx="6.5" cy="6.5" r="5.5" fill="url(#gsph)" stroke="#7a7a7a" stroke-width="1"/><path d="M10.5,10.5 L14,14" stroke="#e0b020" stroke-width="2.8" stroke-linecap="round"/><path d="M10.5,10.5 L14,14" stroke="#8a6a10" stroke-width="0.6"/><path d="M3.5,6.5 h6 M6.5,3.5 v6" stroke="#3a5a9a" stroke-width="2"/></g><g transform="translate(1449,64)"><circle cx="6.5" cy="6.5" r="5.5" fill="url(#gsph)" stroke="#7a7a7a" stroke-width="1"/><path d="M10.5,10.5 L14,14" stroke="#e0b020" stroke-width="2.8" stroke-linecap="round"/><path d="M10.5,10.5 L14,14" stroke="#8a6a10" stroke-width="0.6"/><path d="M3.5,6.5 h6" stroke="#3a5a9a" stroke-width="2"/></g><g transform="translate(1472,64)"><rect x="5.5" y="0.5" width="10" height="7" fill="#fff" stroke="#3a5a8a" stroke-width="1"/><text x="10.5" y="6.5" text-anchor="middle" font-family="Liberation Sans" font-weight="bold" font-size="6" fill="#222">100</text><circle cx="5" cy="10" r="3.5" fill="url(#gsphg)" stroke="#8a8a8a" stroke-width="0.8"/><path d="M7.5,12.5 L10,15" stroke="#f09020" stroke-width="2.2" stroke-linecap="round"/></g><g transform="translate(1501,64)"><path d="M1,15 L12,3" stroke="#a0a0a0" stroke-width="1.1"/><path d="M7,8 L11,3.5 L15.5,6 L12.5,10 Q11,12 9,10.5 Z" fill="#c8c8c8" stroke="#a8a8a8" stroke-width="0.8"/><path d="M2,2 L4,4 L2,6 Z" fill="#b0b0b0"/></g><g transform="translate(1520,64)"><path d="M4,6 h8 l-4,4 z" fill="#9a9a9a"/></g><g transform="translate(1544,64)"><path d="M1.5,3.5 H6 L7,4.5 H14.5 V14.5 H1.5 Z" fill="url(#ggray)" stroke="#8a8a8a"/><path d="M9,12 Q9,7 12,6 V4 L15,7.5 L12,10 V8.5 Q10,9 9,12 Z" fill="#8a8a8a"/></g><g transform="translate(1572,64)"><rect x="1" y="1.5" width="15" height="12" fill="#fff" rx="1"/><rect x="2" y="2.5" width="4" height="4" fill="#a8a8a8"/><rect x="7" y="2.5" width="4" height="4" fill="#a0a0a0"/><rect x="12" y="2.5" width="3.5" height="4" fill="#989898"/><rect x="2" y="8" width="4" height="4.5" fill="#909090"/><rect x="7" y="8" width="4" height="4.5" fill="#8a8a8a"/><rect x="12" y="8" width="3.5" height="4.5" fill="#e0e0e0"/></g><g transform="translate(1592,64)"><path d="M4,6 h8 l-4,4 z" fill="#9a9a9a"/></g><g transform="translate(1610,64)"><path d="M1.5,13.5 L7,1.5 h2 L14.5,13.5 h-4 l-1,-2.5 h-3 l-1,2.5 z M7,8.5 h2.5 l-1.2,-3 z" fill="#a8a8a8"/><path d="M0.5,13.5 h5 M10,13.5 h5.5" stroke="#a8a8a8" stroke-width="1"/></g><g transform="translate(1633,64)"><path d="M0.5,11 L5,1 h2 L11,11 h-3 l-0.8,-2 h-2.6 l-0.8,2 z M5,7 h2 l-1,-2.5 z" fill="#2a6ad0"/><rect x="10.5" y="0.5" width="4" height="4" fill="#fff" stroke="#3a70c8" stroke-width="1"/><path d="M5,15 L12,6 L14,7.5 L7,16 Z" fill="#f0e040" stroke="#c0a020" stroke-width="0.5"/><path d="M2,15.5 L6,13 L7.5,15 Z" fill="#3a70c8"/></g><g transform="translate(1652,64)"><path d="M4,6 h8 l-4,4 z" fill="#000"/></g><g transform="translate(1676,64)"><rect x="1" y="1" width="2" height="14" fill="#555"/><rect x="4.5" y="2.5" width="6" height="3" fill="#fff" stroke="#909090" stroke-width="1"/><rect x="4.5" y="7.5" width="10" height="3" fill="#fff" stroke="#909090" stroke-width="1"/><path d="M4,13.5 H12" stroke="#555" stroke-width="1.2"/><path d="M3.5,13.5 L6,12 V15 Z" fill="#555"/></g><g transform="translate(1699,64)"><rect x="7" y="0" width="2" height="2" fill="#555"/><rect x="7" y="14" width="2" height="2" fill="#555"/><rect x="2.5" y="3.5" width="11" height="3" fill="#fff" stroke="#909090"/><rect x="4.5" y="9.5" width="7" height="3" fill="#fff" stroke="#909090"/><path d="M1,8 H15" stroke="#909090"/></g><g transform="translate(1722,64)"><rect x="13" y="1" width="2" height="14" fill="#555"/><rect x="5.5" y="2.5" width="6" height="3" fill="#fff" stroke="#909090"/><rect x="1.5" y="7.5" width="10" height="3" fill="#fff" stroke="#909090"/><path d="M4,13.5 H12" stroke="#555" stroke-width="1.2"/><path d="M12.5,13.5 L10,12 V15 Z" fill="#555"/></g><g transform="translate(1745,64)"><rect x="1" y="1" width="14" height="2" fill="#555"/><rect x="2.5" y="4.5" width="3" height="7" fill="#fff" stroke="#909090"/><rect x="7.5" y="4.5" width="3" height="11" fill="#fff" stroke="#909090"/><path d="M13,15 V5" stroke="#555" stroke-width="1.2"/><path d="M13,4 L11.5,6.5 H14.5 Z" fill="#555"/></g><g transform="translate(1768,64)"><rect x="0" y="7" width="2" height="2" fill="#555"/><rect x="14" y="7" width="2" height="2" fill="#555"/><rect x="3.5" y="1.5" width="3" height="13" fill="#fff" stroke="#909090"/><rect x="9.5" y="4.5" width="3" height="7" fill="#fff" stroke="#909090"/><path d="M8,2 V14" stroke="#909090"/></g><g transform="translate(1791,64)"><rect x="1" y="13" width="14" height="2" fill="#555"/><rect x="2.5" y="5.5" width="3" height="7" fill="#fff" stroke="#909090"/><rect x="6.5" y="1.5" width="3" height="11" fill="#fff" stroke="#909090"/><path d="M13,1 V11" stroke="#555" stroke-width="1.2"/><path d="M13,12 L11.5,9.5 H14.5 Z" fill="#555"/></g><rect x="1082" y="63" width="1" height="19" fill="#a8a8a8"/><rect x="1083" y="63" width="1" height="19" fill="#ffffff"/><rect x="1134" y="63" width="1" height="19" fill="#a8a8a8"/><rect x="1135" y="63" width="1" height="19" fill="#ffffff"/><rect x="1162" y="63" width="1" height="19" fill="#a8a8a8"/><rect x="1163" y="63" width="1" height="19" fill="#ffffff"/><rect x="1190" y="63" width="1" height="19" fill="#a8a8a8"/><rect x="1191" y="63" width="1" height="19" fill="#ffffff"/><rect x="1218" y="63" width="1" height="19" fill="#a8a8a8"/><rect x="1219" y="63" width="1" height="19" fill="#ffffff"/><rect x="1292" y="63" width="1" height="19" fill="#a8a8a8"/><rect x="1293" y="63" width="1" height="19" fill="#ffffff"/><rect x="1342" y="63" width="1" height="19" fill="#a8a8a8"/><rect x="1343" y="63" width="1" height="19" fill="#ffffff"/><rect x="1370" y="63" width="1" height="19" fill="#a8a8a8"/><rect x="1371" y="63" width="1" height="19" fill="#ffffff"/><rect x="1422" y="63" width="1" height="19" fill="#a8a8a8"/><rect x="1423" y="63" width="1" height="19" fill="#ffffff"/><rect x="1496" y="63" width="1" height="19" fill="#a8a8a8"/><rect x="1497" y="63" width="1" height="19" fill="#ffffff"/><rect x="1538" y="63" width="1" height="19" fill="#a8a8a8"/><rect x="1539" y="63" width="1" height="19" fill="#ffffff"/><rect x="1566" y="63" width="1" height="19" fill="#a8a8a8"/><rect x="1567" y="63" width="1" height="19" fill="#ffffff"/><rect x="1670" y="63" width="1" height="19" fill="#a8a8a8"/><rect x="1671" y="63" width="1" height="19" fill="#ffffff"/><rect x="82.5" y="67.5" width="51" height="18" fill="#ffffe1" stroke="#767676" stroke-width="1"/><text x="85.5" y="80.5" font-family="Liberation Sans" font-size="12" fill="#000" text-anchor="start" font-weight="normal" textLength="45" lengthAdjust="spacingAndGlyphs">Graphics</text></svg></body></html>
